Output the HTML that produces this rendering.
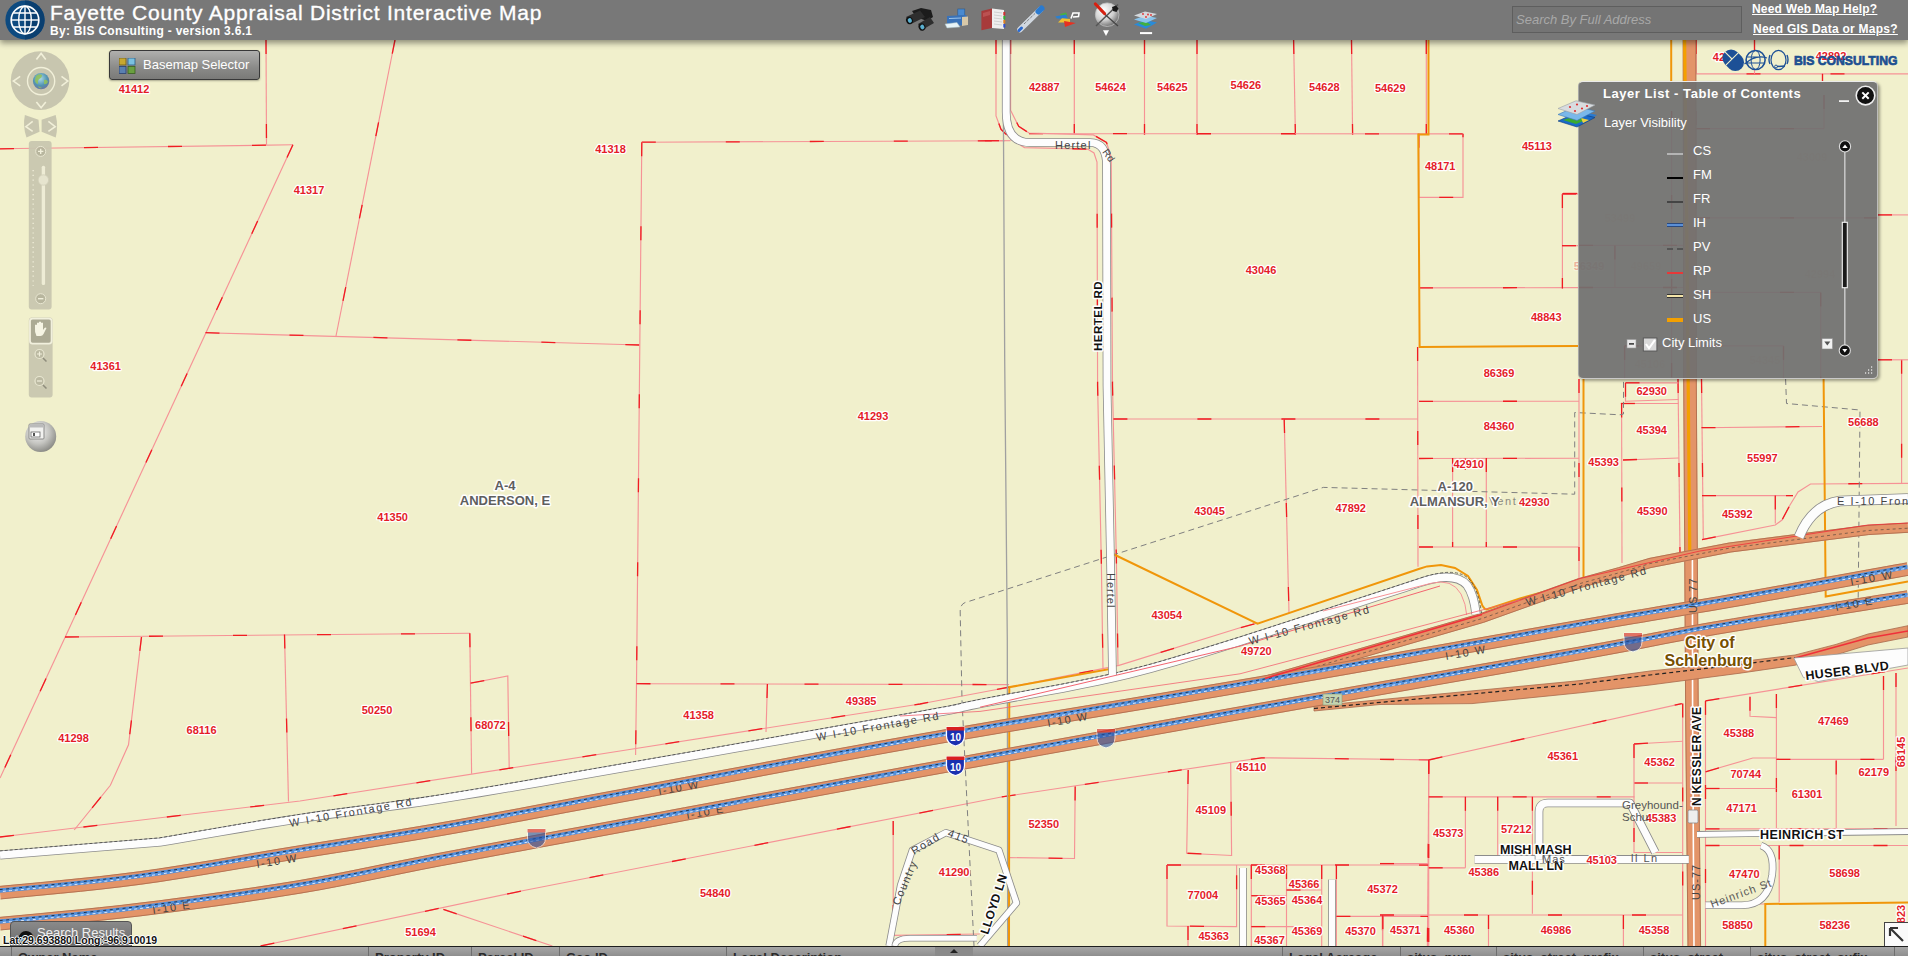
<!DOCTYPE html>
<html><head><meta charset="utf-8">
<style>
html,body{margin:0;padding:0;width:1908px;height:956px;overflow:hidden;background:#f1f0cc;font-family:"Liberation Sans",sans-serif;}
#map{position:absolute;left:0;top:0;width:1908px;height:946px;overflow:hidden;}
.lb{font-family:"Liberation Sans",sans-serif;font-size:11px;font-weight:bold;fill:#e41c28;text-anchor:middle;paint-order:stroke;stroke:#fff;stroke-width:2.4px;stroke-linejoin:round;}
.rl{font-family:"Liberation Sans",sans-serif;fill:#444;paint-order:stroke;stroke:#fff;stroke-width:0px;}
.bl{font-family:"Liberation Sans",sans-serif;font-weight:bold;fill:#111;paint-order:stroke;stroke:#fff;stroke-width:3px;stroke-linejoin:round;}
#hdr{position:absolute;left:0;top:0;width:1908px;height:40px;background:#787878;box-shadow:0 3px 6px rgba(0,0,0,0.42);}
#globe{position:absolute;left:5px;top:0px;width:40px;height:40px;}
#title{position:absolute;left:50px;top:1px;color:#fff;font-size:21px;line-height:24px;white-space:nowrap;letter-spacing:0.78px;-webkit-text-stroke:0.35px #fff;}
#sub{position:absolute;left:50px;top:24px;color:#fff;font-size:12px;font-weight:bold;line-height:14px;white-space:nowrap;letter-spacing:0.3px;}
#search{position:absolute;left:1512px;top:6px;width:230px;height:27px;border:1px solid #5e5e5e;background:#747474;box-sizing:border-box;}
#search span{position:absolute;left:3px;top:5px;color:#a8a8a8;font-style:italic;font-size:13px;white-space:nowrap;}
.lnk{position:absolute;color:#fff;font-weight:bold;font-size:12px;text-decoration:underline;white-space:nowrap;}
#tools{position:absolute;left:900px;top:0;width:270px;height:40px;}
#bot{position:absolute;left:0;top:946px;width:1908px;height:10px;background:linear-gradient(#a6a6a6,#8e8e8e);border-top:1px solid #1e1e1e;box-sizing:border-box;overflow:hidden;}
#bot .c{position:absolute;top:0;height:10px;width:0;border-left:1px solid #6e6e6e;}
#bot .t{position:absolute;top:3px;font-size:13px;font-weight:bold;color:#2a2a2a;white-space:nowrap;}
#panel{position:absolute;left:1578px;top:81px;width:300px;height:298px;background:rgba(112,112,112,0.93);border-radius:5px;box-shadow:2px 2px 3px rgba(0,0,0,0.35);border-top:1px solid rgba(255,255,255,0.85);border-left:1px solid rgba(255,255,255,0.35);border-bottom:1px solid rgba(255,255,255,0.6);border-right:1px solid rgba(255,255,255,0.5);box-sizing:border-box;}
.pt{position:absolute;color:#fff;font-size:13px;white-space:nowrap;line-height:14px;}
.lg{position:absolute;left:88px;width:16px;height:2px;}
#basemap{position:absolute;left:109px;top:50px;width:151px;height:30px;box-sizing:border-box;border:1px solid #383838;border-radius:3px;background:linear-gradient(#b0b0ae,#8a8a88 60%,#7a7a78);box-shadow:0 1px 2px rgba(0,0,0,0.3);}
#basemap span{position:absolute;left:33px;top:6px;color:#fff;font-size:13px;white-space:nowrap;}
#srtab{position:absolute;left:10px;top:921px;width:122px;height:26px;box-sizing:border-box;border-radius:4px 4px 0 0;background:linear-gradient(#8a8a8a,#6a6a6a);border:1px solid #555;}
#srtab span{position:absolute;left:26px;top:3px;color:#eee;font-size:13px;white-space:nowrap;}
#latlon{position:absolute;left:3px;top:934px;font-size:10.5px;font-weight:bold;color:#111;white-space:nowrap;text-shadow:-1px 0 #fff,1px 0 #fff,0 -1px #fff,0 1px #fff;}
</style></head>
<body>
<div id="map">
<svg width="1908" height="946" viewBox="0 0 1908 946" style="position:absolute;left:0;top:0">
<rect width="1908" height="946" fill="#f1f0cc"/>
<polyline points="266.0,40.0 266.5,144.8" fill="none" stroke="#f69296" stroke-width="1.15"/>
<polyline points="266.0,40.0 266.5,144.8" fill="none" stroke="#f01c22" stroke-width="1.3" stroke-dasharray="14,70"/>
<polyline points="0.0,148.8 292.9,144.8" fill="none" stroke="#f69296" stroke-width="1.15"/>
<polyline points="0.0,148.8 292.9,144.8" fill="none" stroke="#f01c22" stroke-width="1.3" stroke-dasharray="14,70"/>
<polyline points="292.9,144.8 0.0,778.0" fill="none" stroke="#f69296" stroke-width="1.15"/>
<polyline points="292.9,144.8 0.0,778.0" fill="none" stroke="#f01c22" stroke-width="1.3" stroke-dasharray="14,70"/>
<polyline points="395.0,40.0 336.0,336.0" fill="none" stroke="#f69296" stroke-width="1.15"/>
<polyline points="395.0,40.0 336.0,336.0" fill="none" stroke="#f01c22" stroke-width="1.3" stroke-dasharray="14,70"/>
<polyline points="205.5,332.7 640.0,345.0" fill="none" stroke="#f69296" stroke-width="1.15"/>
<polyline points="205.5,332.7 640.0,345.0" fill="none" stroke="#f01c22" stroke-width="1.3" stroke-dasharray="14,70"/>
<polyline points="641.8,142.2 1005.0,140.7" fill="none" stroke="#f69296" stroke-width="1.15"/>
<polyline points="641.8,142.2 1005.0,140.7" fill="none" stroke="#f01c22" stroke-width="1.3" stroke-dasharray="14,70"/>
<polyline points="641.8,142.2 636.5,683.7 635.6,754.9" fill="none" stroke="#f69296" stroke-width="1.15"/>
<polyline points="641.8,142.2 636.5,683.7 635.6,754.9" fill="none" stroke="#f01c22" stroke-width="1.3" stroke-dasharray="14,70"/>
<polyline points="65.0,637.0 470.0,633.3" fill="none" stroke="#f69296" stroke-width="1.15"/>
<polyline points="65.0,637.0 470.0,633.3" fill="none" stroke="#f01c22" stroke-width="1.3" stroke-dasharray="14,70"/>
<polyline points="141.5,637.0 128.5,744.8 110.4,785.3 74.2,830.0" fill="none" stroke="#f69296" stroke-width="1.15"/>
<polyline points="141.5,637.0 128.5,744.8 110.4,785.3 74.2,830.0" fill="none" stroke="#f01c22" stroke-width="1.3" stroke-dasharray="14,70"/>
<polyline points="284.5,634.5 288.5,801.6" fill="none" stroke="#f69296" stroke-width="1.15"/>
<polyline points="284.5,634.5 288.5,801.6" fill="none" stroke="#f01c22" stroke-width="1.3" stroke-dasharray="14,70"/>
<polyline points="469.8,633.3 471.6,773.7" fill="none" stroke="#f69296" stroke-width="1.15"/>
<polyline points="469.8,633.3 471.6,773.7" fill="none" stroke="#f01c22" stroke-width="1.3" stroke-dasharray="14,70"/>
<polyline points="470.5,683.2 507.8,676.0 509.2,768.3" fill="none" stroke="#f69296" stroke-width="1.15"/>
<polyline points="470.5,683.2 507.8,676.0 509.2,768.3" fill="none" stroke="#f01c22" stroke-width="1.3" stroke-dasharray="14,70"/>
<polyline points="0.0,837.0 300.0,801.0 620.0,751.0 920.0,704.0 1010.0,687.0 1119.0,665.4 1240.0,627.8 1258.0,623.0" fill="none" stroke="#f69296" stroke-width="1.15"/>
<polyline points="0.0,837.0 300.0,801.0 620.0,751.0 920.0,704.0 1010.0,687.0 1119.0,665.4 1240.0,627.8 1258.0,623.0" fill="none" stroke="#f01c22" stroke-width="1.3" stroke-dasharray="14,70"/>
<polyline points="636.5,683.7 1009.0,684.6" fill="none" stroke="#f69296" stroke-width="1.15"/>
<polyline points="636.5,683.7 1009.0,684.6" fill="none" stroke="#f01c22" stroke-width="1.3" stroke-dasharray="14,70"/>
<polyline points="767.4,684.0 766.0,732.0" fill="none" stroke="#f69296" stroke-width="1.15"/>
<polyline points="767.4,684.0 766.0,732.0" fill="none" stroke="#f01c22" stroke-width="1.3" stroke-dasharray="14,70"/>
<polyline points="260.6,946.0 520.0,891.3 1000.0,797.2 1261.6,757.8 1428.9,759.8" fill="none" stroke="#f69296" stroke-width="1.15"/>
<polyline points="260.6,946.0 520.0,891.3 1000.0,797.2 1261.6,757.8 1428.9,759.8" fill="none" stroke="#f01c22" stroke-width="1.3" stroke-dasharray="14,70"/>
<polyline points="1380.0,759.3 1428.7,760.0" fill="none" stroke="#f69296" stroke-width="1.15"/>
<polyline points="1380.0,759.3 1428.7,760.0" fill="none" stroke="#f01c22" stroke-width="1.3" stroke-dasharray="14,70"/>
<polyline points="1428.7,760.0 1681.8,703.6" fill="none" stroke="#f69296" stroke-width="1.15"/>
<polyline points="1428.7,760.0 1681.8,703.6" fill="none" stroke="#f01c22" stroke-width="1.3" stroke-dasharray="14,70"/>
<polyline points="1705.5,700.9 1908.0,668.0" fill="none" stroke="#f69296" stroke-width="1.15"/>
<polyline points="1705.5,700.9 1908.0,668.0" fill="none" stroke="#f01c22" stroke-width="1.3" stroke-dasharray="14,70"/>
<polyline points="443.4,909.4 552.4,946.0" fill="none" stroke="#f69296" stroke-width="1.15"/>
<polyline points="443.4,909.4 552.4,946.0" fill="none" stroke="#f01c22" stroke-width="1.3" stroke-dasharray="14,70"/>
<polyline points="893.2,820.9 893.2,935.4 979.8,934.0" fill="none" stroke="#f69296" stroke-width="1.15"/>
<polyline points="893.2,820.9 893.2,935.4 979.8,934.0" fill="none" stroke="#f01c22" stroke-width="1.3" stroke-dasharray="14,70"/>
<polyline points="1075.2,786.5 1074.5,858.5 1009.0,857.6" fill="none" stroke="#f69296" stroke-width="1.15"/>
<polyline points="1075.2,786.5 1074.5,858.5 1009.0,857.6" fill="none" stroke="#f01c22" stroke-width="1.3" stroke-dasharray="14,70"/>
<polyline points="1188.2,770.0 1186.7,853.2 1231.6,855.5 1230.7,762.5" fill="none" stroke="#f69296" stroke-width="1.15"/>
<polyline points="1188.2,770.0 1186.7,853.2 1231.6,855.5 1230.7,762.5" fill="none" stroke="#f01c22" stroke-width="1.3" stroke-dasharray="14,70"/>
<polyline points="1428.9,759.8 1427.4,946.0" fill="none" stroke="#f69296" stroke-width="1.15"/>
<polyline points="1428.9,759.8 1427.4,946.0" fill="none" stroke="#f01c22" stroke-width="1.3" stroke-dasharray="14,70"/>
<polyline points="1167.0,865.0 1428.9,865.0" fill="none" stroke="#f69296" stroke-width="1.15"/>
<polyline points="1167.0,865.0 1428.9,865.0" fill="none" stroke="#f01c22" stroke-width="1.3" stroke-dasharray="14,70"/>
<polyline points="1167.0,865.0 1167.0,926.0 1236.6,926.6 1236.6,865.0" fill="none" stroke="#f69296" stroke-width="1.15"/>
<polyline points="1167.0,865.0 1167.0,926.0 1236.6,926.6 1236.6,865.0" fill="none" stroke="#f01c22" stroke-width="1.3" stroke-dasharray="14,70"/>
<polyline points="1188.0,926.0 1188.0,946.0" fill="none" stroke="#f69296" stroke-width="1.15"/>
<polyline points="1188.0,926.0 1188.0,946.0" fill="none" stroke="#f01c22" stroke-width="1.3" stroke-dasharray="14,70"/>
<polyline points="1251.3,865.0 1251.3,946.0" fill="none" stroke="#f69296" stroke-width="1.15"/>
<polyline points="1251.3,865.0 1251.3,946.0" fill="none" stroke="#f01c22" stroke-width="1.3" stroke-dasharray="14,70"/>
<polyline points="1286.5,865.0 1286.5,946.0" fill="none" stroke="#f69296" stroke-width="1.15"/>
<polyline points="1286.5,865.0 1286.5,946.0" fill="none" stroke="#f01c22" stroke-width="1.3" stroke-dasharray="14,70"/>
<polyline points="1251.3,895.7 1286.5,895.7" fill="none" stroke="#f69296" stroke-width="1.15"/>
<polyline points="1251.3,895.7 1286.5,895.7" fill="none" stroke="#f01c22" stroke-width="1.3" stroke-dasharray="14,70"/>
<polyline points="1251.3,926.6 1321.7,926.6" fill="none" stroke="#f69296" stroke-width="1.15"/>
<polyline points="1251.3,926.6 1321.7,926.6" fill="none" stroke="#f01c22" stroke-width="1.3" stroke-dasharray="14,70"/>
<polyline points="1286.5,890.0 1321.7,890.0" fill="none" stroke="#f69296" stroke-width="1.15"/>
<polyline points="1286.5,890.0 1321.7,890.0" fill="none" stroke="#f01c22" stroke-width="1.3" stroke-dasharray="14,70"/>
<polyline points="1321.7,865.0 1321.7,946.0" fill="none" stroke="#f69296" stroke-width="1.15"/>
<polyline points="1321.7,865.0 1321.7,946.0" fill="none" stroke="#f01c22" stroke-width="1.3" stroke-dasharray="14,70"/>
<polyline points="1336.4,865.0 1336.4,946.0" fill="none" stroke="#f69296" stroke-width="1.15"/>
<polyline points="1336.4,865.0 1336.4,946.0" fill="none" stroke="#f01c22" stroke-width="1.3" stroke-dasharray="14,70"/>
<polyline points="1336.4,916.3 1428.0,916.3" fill="none" stroke="#f69296" stroke-width="1.15"/>
<polyline points="1336.4,916.3 1428.0,916.3" fill="none" stroke="#f01c22" stroke-width="1.3" stroke-dasharray="14,70"/>
<polyline points="1382.5,916.3 1382.5,946.0" fill="none" stroke="#f69296" stroke-width="1.15"/>
<polyline points="1382.5,916.3 1382.5,946.0" fill="none" stroke="#f01c22" stroke-width="1.3" stroke-dasharray="14,70"/>
<polyline points="1074.3,40.0 1074.3,133.7" fill="none" stroke="#f69296" stroke-width="1.15"/>
<polyline points="1074.3,40.0 1074.3,133.7" fill="none" stroke="#f01c22" stroke-width="1.3" stroke-dasharray="14,70"/>
<polyline points="1144.5,40.0 1144.5,134.8" fill="none" stroke="#f69296" stroke-width="1.15"/>
<polyline points="1144.5,40.0 1144.5,134.8" fill="none" stroke="#f01c22" stroke-width="1.3" stroke-dasharray="14,70"/>
<polyline points="1197.0,40.0 1197.0,134.8" fill="none" stroke="#f69296" stroke-width="1.15"/>
<polyline points="1197.0,40.0 1197.0,134.8" fill="none" stroke="#f01c22" stroke-width="1.3" stroke-dasharray="14,70"/>
<polyline points="1293.6,40.0 1295.4,134.8" fill="none" stroke="#f69296" stroke-width="1.15"/>
<polyline points="1293.6,40.0 1295.4,134.8" fill="none" stroke="#f01c22" stroke-width="1.3" stroke-dasharray="14,70"/>
<polyline points="1351.5,40.0 1352.6,134.8" fill="none" stroke="#f69296" stroke-width="1.15"/>
<polyline points="1351.5,40.0 1352.6,134.8" fill="none" stroke="#f01c22" stroke-width="1.3" stroke-dasharray="14,70"/>
<polyline points="1029.0,133.7 1462.7,133.8" fill="none" stroke="#f69296" stroke-width="1.15"/>
<polyline points="1029.0,133.7 1462.7,133.8" fill="none" stroke="#f01c22" stroke-width="1.3" stroke-dasharray="14,70"/>
<polyline points="985.0,140.7 1010.6,140.7" fill="none" stroke="#f69296" stroke-width="1.15"/>
<polyline points="985.0,140.7 1010.6,140.7" fill="none" stroke="#f01c22" stroke-width="1.3" stroke-dasharray="14,70"/>
<polyline points="1426.3,40.0 1426.3,133.8" fill="none" stroke="#f69296" stroke-width="1.15"/>
<polyline points="1426.3,40.0 1426.3,133.8" fill="none" stroke="#f01c22" stroke-width="1.3" stroke-dasharray="14,70"/>
<polyline points="996.0,40.0 996.0,116.0 1001.0,129.3 1012.0,140.0 1024.5,147.6 1087.5,149.1 1094.0,153.0 1097.0,162.0 1097.6,386.0 1101.3,560.0 1103.0,668.7" fill="none" stroke="#f69296" stroke-width="1.15"/>
<polyline points="996.0,40.0 996.0,116.0 1001.0,129.3 1012.0,140.0 1024.5,147.6 1087.5,149.1 1094.0,153.0 1097.0,162.0 1097.6,386.0 1101.3,560.0 1103.0,668.7" fill="none" stroke="#f01c22" stroke-width="1.3" stroke-dasharray="14,70"/>
<polyline points="1010.6,40.0 1010.6,110.3 1018.7,126.4 1029.0,133.0 1093.4,134.9 1106.5,142.5 1111.2,157.0 1112.5,386.0 1116.4,560.0 1118.0,665.4" fill="none" stroke="#f69296" stroke-width="1.15"/>
<polyline points="1010.6,40.0 1010.6,110.3 1018.7,126.4 1029.0,133.0 1093.4,134.9 1106.5,142.5 1111.2,157.0 1112.5,386.0 1116.4,560.0 1118.0,665.4" fill="none" stroke="#f01c22" stroke-width="1.3" stroke-dasharray="14,70"/>
<polyline points="1113.4,419.0 1417.6,419.0" fill="none" stroke="#f69296" stroke-width="1.15"/>
<polyline points="1113.4,419.0 1417.6,419.0" fill="none" stroke="#f01c22" stroke-width="1.3" stroke-dasharray="14,70"/>
<polyline points="1284.2,419.0 1289.0,613.0" fill="none" stroke="#f69296" stroke-width="1.15"/>
<polyline points="1284.2,419.0 1289.0,613.0" fill="none" stroke="#f01c22" stroke-width="1.3" stroke-dasharray="14,70"/>
<polyline points="1417.6,347.0 1418.0,566.8" fill="none" stroke="#f69296" stroke-width="1.15"/>
<polyline points="1417.6,347.0 1418.0,566.8" fill="none" stroke="#f01c22" stroke-width="1.3" stroke-dasharray="14,70"/>
<polyline points="1418.8,133.8 1418.8,197.4 1463.0,197.4 1463.0,133.8" fill="none" stroke="#f69296" stroke-width="1.15"/>
<polyline points="1418.8,133.8 1418.8,197.4 1463.0,197.4 1463.0,133.8" fill="none" stroke="#f01c22" stroke-width="1.3" stroke-dasharray="14,70"/>
<polyline points="1419.0,287.9 1578.0,287.6" fill="none" stroke="#f69296" stroke-width="1.15"/>
<polyline points="1419.0,287.9 1578.0,287.6" fill="none" stroke="#f01c22" stroke-width="1.3" stroke-dasharray="14,70"/>
<polyline points="1562.4,194.0 1562.4,288.5" fill="none" stroke="#f69296" stroke-width="1.15"/>
<polyline points="1562.4,194.0 1562.4,288.5" fill="none" stroke="#f01c22" stroke-width="1.3" stroke-dasharray="14,70"/>
<polyline points="1562.0,194.0 1578.0,194.0" fill="none" stroke="#f69296" stroke-width="1.15"/>
<polyline points="1562.0,194.0 1578.0,194.0" fill="none" stroke="#f01c22" stroke-width="1.3" stroke-dasharray="14,70"/>
<polyline points="1562.0,245.7 1578.0,245.7" fill="none" stroke="#f69296" stroke-width="1.15"/>
<polyline points="1562.0,245.7 1578.0,245.7" fill="none" stroke="#f01c22" stroke-width="1.3" stroke-dasharray="14,70"/>
<polyline points="1419.0,401.3 1579.0,401.2" fill="none" stroke="#f69296" stroke-width="1.15"/>
<polyline points="1419.0,401.3 1579.0,401.2" fill="none" stroke="#f01c22" stroke-width="1.3" stroke-dasharray="14,70"/>
<polyline points="1419.0,458.5 1579.0,458.2" fill="none" stroke="#f69296" stroke-width="1.15"/>
<polyline points="1419.0,458.5 1579.0,458.2" fill="none" stroke="#f01c22" stroke-width="1.3" stroke-dasharray="14,70"/>
<polyline points="1419.0,547.0 1579.0,547.0" fill="none" stroke="#f69296" stroke-width="1.15"/>
<polyline points="1419.0,547.0 1579.0,547.0" fill="none" stroke="#f01c22" stroke-width="1.3" stroke-dasharray="14,70"/>
<polyline points="1452.6,458.0 1452.6,547.0" fill="none" stroke="#f69296" stroke-width="1.15"/>
<polyline points="1452.6,458.0 1452.6,547.0" fill="none" stroke="#f01c22" stroke-width="1.3" stroke-dasharray="14,70"/>
<polyline points="1486.3,458.0 1486.3,547.0" fill="none" stroke="#f69296" stroke-width="1.15"/>
<polyline points="1486.3,458.0 1486.3,547.0" fill="none" stroke="#f01c22" stroke-width="1.3" stroke-dasharray="14,70"/>
<polyline points="1465.3,458.5 1465.3,470.0" fill="none" stroke="#f69296" stroke-width="1.15"/>
<polyline points="1465.3,458.5 1465.3,470.0" fill="none" stroke="#f01c22" stroke-width="1.3" stroke-dasharray="14,70"/>
<polyline points="1579.0,379.0 1579.0,580.6" fill="none" stroke="#f69296" stroke-width="1.15"/>
<polyline points="1579.0,379.0 1579.0,580.6" fill="none" stroke="#f01c22" stroke-width="1.3" stroke-dasharray="14,70"/>
<polyline points="1621.6,403.5 1622.0,563.0" fill="none" stroke="#f69296" stroke-width="1.15"/>
<polyline points="1621.6,403.5 1622.0,563.0" fill="none" stroke="#f01c22" stroke-width="1.3" stroke-dasharray="14,70"/>
<polyline points="1623.0,460.0 1678.7,458.0" fill="none" stroke="#f69296" stroke-width="1.15"/>
<polyline points="1623.0,460.0 1678.7,458.0" fill="none" stroke="#f01c22" stroke-width="1.3" stroke-dasharray="14,70"/>
<polyline points="1678.0,379.0 1680.0,552.7" fill="none" stroke="#f69296" stroke-width="1.15"/>
<polyline points="1678.0,379.0 1680.0,552.7" fill="none" stroke="#f01c22" stroke-width="1.3" stroke-dasharray="14,70"/>
<polyline points="1625.5,382.8 1678.4,382.8" fill="none" stroke="#f69296" stroke-width="1.15"/>
<polyline points="1625.5,382.8 1678.4,382.8" fill="none" stroke="#f01c22" stroke-width="1.3" stroke-dasharray="14,70"/>
<polyline points="1625.5,382.8 1625.5,401.2 1678.4,399.5" fill="none" stroke="#f69296" stroke-width="1.15"/>
<polyline points="1625.5,382.8 1625.5,401.2 1678.4,399.5" fill="none" stroke="#f01c22" stroke-width="1.3" stroke-dasharray="14,70"/>
<polyline points="1620.9,403.5 1678.4,403.5" fill="none" stroke="#f69296" stroke-width="1.15"/>
<polyline points="1620.9,403.5 1678.4,403.5" fill="none" stroke="#f01c22" stroke-width="1.3" stroke-dasharray="14,70"/>
<polyline points="1701.5,379.0 1703.3,540.0" fill="none" stroke="#f69296" stroke-width="1.15"/>
<polyline points="1701.5,379.0 1703.3,540.0" fill="none" stroke="#f01c22" stroke-width="1.3" stroke-dasharray="14,70"/>
<polyline points="1701.5,427.7 1822.0,426.5" fill="none" stroke="#f69296" stroke-width="1.15"/>
<polyline points="1701.5,427.7 1822.0,426.5" fill="none" stroke="#f01c22" stroke-width="1.3" stroke-dasharray="14,70"/>
<polyline points="1702.0,495.6 1793.0,495.6" fill="none" stroke="#f69296" stroke-width="1.15"/>
<polyline points="1702.0,495.6 1793.0,495.6" fill="none" stroke="#f01c22" stroke-width="1.3" stroke-dasharray="14,70"/>
<polyline points="1775.3,495.6 1775.3,523.5" fill="none" stroke="#f69296" stroke-width="1.15"/>
<polyline points="1775.3,495.6 1775.3,523.5" fill="none" stroke="#f01c22" stroke-width="1.3" stroke-dasharray="14,70"/>
<polyline points="1702.0,539.6 1775.3,525.0 1782.0,520.0 1790.0,505.0 1798.0,492.0 1810.5,484.0 1908.0,483.3" fill="none" stroke="#f69296" stroke-width="1.15"/>
<polyline points="1702.0,539.6 1775.3,525.0 1782.0,520.0 1790.0,505.0 1798.0,492.0 1810.5,484.0 1908.0,483.3" fill="none" stroke="#f01c22" stroke-width="1.3" stroke-dasharray="14,70"/>
<polyline points="1901.6,359.8 1901.6,483.3" fill="none" stroke="#f69296" stroke-width="1.15"/>
<polyline points="1901.6,359.8 1901.6,483.3" fill="none" stroke="#f01c22" stroke-width="1.3" stroke-dasharray="14,70"/>
<polyline points="1878.0,214.9 1908.0,214.9" fill="none" stroke="#f69296" stroke-width="1.15"/>
<polyline points="1878.0,214.9 1908.0,214.9" fill="none" stroke="#f01c22" stroke-width="1.3" stroke-dasharray="14,70"/>
<polyline points="1878.0,359.8 1908.0,359.8" fill="none" stroke="#f69296" stroke-width="1.15"/>
<polyline points="1878.0,359.8 1908.0,359.8" fill="none" stroke="#f01c22" stroke-width="1.3" stroke-dasharray="14,70"/>
<polyline points="1696.3,40.0 1696.3,73.8 1908.0,73.8" fill="none" stroke="#f69296" stroke-width="1.15"/>
<polyline points="1696.3,40.0 1696.3,73.8 1908.0,73.8" fill="none" stroke="#f01c22" stroke-width="1.3" stroke-dasharray="14,70"/>
<polyline points="1754.5,40.0 1754.5,73.8" fill="none" stroke="#f69296" stroke-width="1.15"/>
<polyline points="1754.5,40.0 1754.5,73.8" fill="none" stroke="#f01c22" stroke-width="1.3" stroke-dasharray="14,70"/>
<polyline points="1822.5,73.8 1822.5,81.0" fill="none" stroke="#f69296" stroke-width="1.15"/>
<polyline points="1822.5,73.8 1822.5,81.0" fill="none" stroke="#f01c22" stroke-width="1.3" stroke-dasharray="14,70"/>
<polyline points="1428.7,760.0 1428.7,946.0" fill="none" stroke="#f69296" stroke-width="1.15"/>
<polyline points="1428.7,760.0 1428.7,946.0" fill="none" stroke="#f01c22" stroke-width="1.3" stroke-dasharray="14,70"/>
<polyline points="1428.7,796.8 1634.5,796.8" fill="none" stroke="#f69296" stroke-width="1.15"/>
<polyline points="1428.7,796.8 1634.5,796.8" fill="none" stroke="#f01c22" stroke-width="1.3" stroke-dasharray="14,70"/>
<polyline points="1682.7,703.6 1682.7,946.0" fill="none" stroke="#f69296" stroke-width="1.15"/>
<polyline points="1682.7,703.6 1682.7,946.0" fill="none" stroke="#f01c22" stroke-width="1.3" stroke-dasharray="14,70"/>
<polyline points="1634.0,744.0 1682.7,741.2" fill="none" stroke="#f69296" stroke-width="1.15"/>
<polyline points="1634.0,744.0 1682.7,741.2" fill="none" stroke="#f01c22" stroke-width="1.3" stroke-dasharray="14,70"/>
<polyline points="1634.0,783.0 1682.7,783.0" fill="none" stroke="#f69296" stroke-width="1.15"/>
<polyline points="1634.0,783.0 1682.7,783.0" fill="none" stroke="#f01c22" stroke-width="1.3" stroke-dasharray="14,70"/>
<polyline points="1634.0,744.0 1634.0,852.5 1682.7,852.5" fill="none" stroke="#f69296" stroke-width="1.15"/>
<polyline points="1634.0,744.0 1634.0,852.5 1682.7,852.5" fill="none" stroke="#f01c22" stroke-width="1.3" stroke-dasharray="14,70"/>
<polyline points="1465.4,796.8 1465.4,867.8" fill="none" stroke="#f69296" stroke-width="1.15"/>
<polyline points="1465.4,796.8 1465.4,867.8" fill="none" stroke="#f01c22" stroke-width="1.3" stroke-dasharray="14,70"/>
<polyline points="1380.0,863.6 1428.7,863.6" fill="none" stroke="#f69296" stroke-width="1.15"/>
<polyline points="1380.0,863.6 1428.7,863.6" fill="none" stroke="#f01c22" stroke-width="1.3" stroke-dasharray="14,70"/>
<polyline points="1428.7,867.8 1465.4,867.8" fill="none" stroke="#f69296" stroke-width="1.15"/>
<polyline points="1428.7,867.8 1465.4,867.8" fill="none" stroke="#f01c22" stroke-width="1.3" stroke-dasharray="14,70"/>
<polyline points="1497.7,796.8 1497.7,858.0" fill="none" stroke="#f69296" stroke-width="1.15"/>
<polyline points="1497.7,796.8 1497.7,858.0" fill="none" stroke="#f01c22" stroke-width="1.3" stroke-dasharray="14,70"/>
<polyline points="1532.4,796.8 1532.4,913.7" fill="none" stroke="#f69296" stroke-width="1.15"/>
<polyline points="1532.4,796.8 1532.4,913.7" fill="none" stroke="#f01c22" stroke-width="1.3" stroke-dasharray="14,70"/>
<polyline points="1380.0,915.0 1682.7,915.0" fill="none" stroke="#f69296" stroke-width="1.15"/>
<polyline points="1380.0,915.0 1682.7,915.0" fill="none" stroke="#f01c22" stroke-width="1.3" stroke-dasharray="14,70"/>
<polyline points="1488.5,915.0 1488.5,946.0" fill="none" stroke="#f69296" stroke-width="1.15"/>
<polyline points="1488.5,915.0 1488.5,946.0" fill="none" stroke="#f01c22" stroke-width="1.3" stroke-dasharray="14,70"/>
<polyline points="1623.4,915.0 1623.4,946.0" fill="none" stroke="#f69296" stroke-width="1.15"/>
<polyline points="1623.4,915.0 1623.4,946.0" fill="none" stroke="#f01c22" stroke-width="1.3" stroke-dasharray="14,70"/>
<polyline points="1382.8,915.0 1382.8,946.0" fill="none" stroke="#f69296" stroke-width="1.15"/>
<polyline points="1382.8,915.0 1382.8,946.0" fill="none" stroke="#f01c22" stroke-width="1.3" stroke-dasharray="14,70"/>
<polyline points="1705.5,700.9 1705.5,946.0" fill="none" stroke="#f69296" stroke-width="1.15"/>
<polyline points="1705.5,700.9 1705.5,946.0" fill="none" stroke="#f01c22" stroke-width="1.3" stroke-dasharray="14,70"/>
<polyline points="1776.4,694.0 1776.4,830.0" fill="none" stroke="#f69296" stroke-width="1.15"/>
<polyline points="1776.4,694.0 1776.4,830.0" fill="none" stroke="#f01c22" stroke-width="1.3" stroke-dasharray="14,70"/>
<polyline points="1750.0,696.7 1750.0,716.2 1776.4,717.6" fill="none" stroke="#f69296" stroke-width="1.15"/>
<polyline points="1750.0,696.7 1750.0,716.2 1776.4,717.6" fill="none" stroke="#f01c22" stroke-width="1.3" stroke-dasharray="14,70"/>
<polyline points="1776.4,759.3 1883.5,759.3" fill="none" stroke="#f69296" stroke-width="1.15"/>
<polyline points="1776.4,759.3 1883.5,759.3" fill="none" stroke="#f01c22" stroke-width="1.3" stroke-dasharray="14,70"/>
<polyline points="1883.5,676.0 1883.5,759.3" fill="none" stroke="#f69296" stroke-width="1.15"/>
<polyline points="1883.5,676.0 1883.5,759.3" fill="none" stroke="#f01c22" stroke-width="1.3" stroke-dasharray="14,70"/>
<polyline points="1896.0,673.0 1896.0,826.0" fill="none" stroke="#f69296" stroke-width="1.15"/>
<polyline points="1896.0,673.0 1896.0,826.0" fill="none" stroke="#f01c22" stroke-width="1.3" stroke-dasharray="14,70"/>
<polyline points="1705.5,771.8 1752.8,758.0 1776.4,758.0" fill="none" stroke="#f69296" stroke-width="1.15"/>
<polyline points="1705.5,771.8 1752.8,758.0 1776.4,758.0" fill="none" stroke="#f01c22" stroke-width="1.3" stroke-dasharray="14,70"/>
<polyline points="1705.5,788.5 1776.4,788.5" fill="none" stroke="#f69296" stroke-width="1.15"/>
<polyline points="1705.5,788.5 1776.4,788.5" fill="none" stroke="#f01c22" stroke-width="1.3" stroke-dasharray="14,70"/>
<polyline points="1705.5,828.8 1908.0,828.8" fill="none" stroke="#f69296" stroke-width="1.15"/>
<polyline points="1705.5,828.8 1908.0,828.8" fill="none" stroke="#f01c22" stroke-width="1.3" stroke-dasharray="14,70"/>
<polyline points="1836.2,760.5 1836.2,828.8" fill="none" stroke="#f69296" stroke-width="1.15"/>
<polyline points="1836.2,760.5 1836.2,828.8" fill="none" stroke="#f01c22" stroke-width="1.3" stroke-dasharray="14,70"/>
<polyline points="1705.5,845.5 1908.0,845.5" fill="none" stroke="#f69296" stroke-width="1.15"/>
<polyline points="1705.5,845.5 1908.0,845.5" fill="none" stroke="#f01c22" stroke-width="1.3" stroke-dasharray="14,70"/>
<polyline points="1779.2,845.5 1779.2,902.6" fill="none" stroke="#f69296" stroke-width="1.15"/>
<polyline points="1779.2,845.5 1779.2,902.6" fill="none" stroke="#f01c22" stroke-width="1.3" stroke-dasharray="14,70"/>
<polyline points="1705.5,904.0 1765.3,904.0" fill="none" stroke="#f69296" stroke-width="1.15"/>
<polyline points="1705.5,904.0 1765.3,904.0" fill="none" stroke="#f01c22" stroke-width="1.3" stroke-dasharray="14,70"/>
<polyline points="1563.0,193.5 1578.0,193.5" fill="none" stroke="#f69296" stroke-width="1.15"/>
<polyline points="1563.0,193.5 1578.0,193.5" fill="none" stroke="#f01c22" stroke-width="1.3" stroke-dasharray="14,70"/>
<polyline points="1696.0,111.0 1696.0,379.0" fill="none" stroke="#f69296" stroke-width="1.15"/>
<polyline points="1696.0,111.0 1696.0,379.0" fill="none" stroke="#f01c22" stroke-width="1.3" stroke-dasharray="14,70"/>
<polyline points="1671.6,111.0 1671.6,379.0" fill="none" stroke="#f69296" stroke-width="1.15"/>
<polyline points="1671.6,111.0 1671.6,379.0" fill="none" stroke="#f01c22" stroke-width="1.3" stroke-dasharray="14,70"/>
<polyline points="1696.0,128.6 1824.0,128.6" fill="none" stroke="#f69296" stroke-width="1.15"/>
<polyline points="1696.0,128.6 1824.0,128.6" fill="none" stroke="#f01c22" stroke-width="1.3" stroke-dasharray="14,70"/>
<polyline points="1824.0,95.0 1824.0,128.6" fill="none" stroke="#f69296" stroke-width="1.15"/>
<polyline points="1824.0,95.0 1824.0,128.6" fill="none" stroke="#f01c22" stroke-width="1.3" stroke-dasharray="14,70"/>
<polyline points="1579.0,245.4 1696.0,245.4" fill="none" stroke="#f69296" stroke-width="1.15"/>
<polyline points="1579.0,245.4 1696.0,245.4" fill="none" stroke="#f01c22" stroke-width="1.3" stroke-dasharray="14,70"/>
<polyline points="1614.9,245.4 1614.9,287.5" fill="none" stroke="#f69296" stroke-width="1.15"/>
<polyline points="1614.9,245.4 1614.9,287.5" fill="none" stroke="#f01c22" stroke-width="1.3" stroke-dasharray="14,70"/>
<polyline points="1579.0,287.5 1696.0,287.5" fill="none" stroke="#f69296" stroke-width="1.15"/>
<polyline points="1579.0,287.5 1696.0,287.5" fill="none" stroke="#f01c22" stroke-width="1.3" stroke-dasharray="14,70"/>
<polyline points="1696.0,217.8 1878.0,217.8" fill="none" stroke="#f69296" stroke-width="1.15"/>
<polyline points="1696.0,217.8 1878.0,217.8" fill="none" stroke="#f01c22" stroke-width="1.3" stroke-dasharray="14,70"/>
<polyline points="1696.0,292.4 1820.7,292.4" fill="none" stroke="#f69296" stroke-width="1.15"/>
<polyline points="1696.0,292.4 1820.7,292.4" fill="none" stroke="#f01c22" stroke-width="1.3" stroke-dasharray="14,70"/>
<polyline points="1820.7,292.4 1820.7,379.0" fill="none" stroke="#f69296" stroke-width="1.15"/>
<polyline points="1820.7,292.4 1820.7,379.0" fill="none" stroke="#f01c22" stroke-width="1.3" stroke-dasharray="14,70"/>
<polyline points="1624.6,345.9 1624.6,379.0" fill="none" stroke="#f69296" stroke-width="1.15"/>
<polyline points="1624.6,345.9 1624.6,379.0" fill="none" stroke="#f01c22" stroke-width="1.3" stroke-dasharray="14,70"/>
<polyline points="1783.5,345.9 1783.5,379.0" fill="none" stroke="#f69296" stroke-width="1.15"/>
<polyline points="1783.5,345.9 1783.5,379.0" fill="none" stroke="#f01c22" stroke-width="1.3" stroke-dasharray="14,70"/>
<polyline points="1624.6,345.9 1783.5,345.9" fill="none" stroke="#f69296" stroke-width="1.15"/>
<polyline points="1624.6,345.9 1783.5,345.9" fill="none" stroke="#f01c22" stroke-width="1.3" stroke-dasharray="14,70"/>
<polyline points="1003,40 1004.7,360 1007.3,640 1007.7,946" fill="none" stroke="#a0a0a0" stroke-width="1.3"/>
<path d="M974,946 L962,700 L960.2,612 Q960,603 967.3,601.9 L1323.3,487.4 L1574.7,494.2 L1574.7,412.5 L1620,414.8 L1623.5,414 L1623.5,379" stroke="#808080" stroke-width="1" stroke-dasharray="6,4" fill="none"/>
<path d="M1785.6,379 L1786.5,403.5 L1860,410 L1858.2,598" stroke="#808080" stroke-width="1" stroke-dasharray="6,4" fill="none"/>
<polyline points="1428.5,40.0 1428.5,134.6 1418.3,134.6 1419.6,347.0 1578.0,346.0" fill="none" stroke="#f0960a" stroke-width="2"/>
<polyline points="1109.7,552.5 1111.7,668.7 1009.3,687.2 1009.0,946.0" fill="none" stroke="#f0960a" stroke-width="2"/>
<polyline points="1109.9,552.5 1257.5,623.7 1419.5,568.8 1427.0,566.4 1441.0,565.0 1455.0,568.0 1468.0,576.0 1477.0,590.0 1482.5,606.0 1485.5,609.7" fill="none" stroke="#f0960a" stroke-width="2"/>
<polyline points="1583.5,379.0 1583.5,580.6 1520.0,598.4 1485.5,609.7" fill="none" stroke="#f0960a" stroke-width="2"/>
<polyline points="1823.6,379.0 1825.7,596.5 1908.0,581.6" fill="none" stroke="#f0960a" stroke-width="2"/>
<polyline points="1765.3,946.0 1765.3,904.0 1908.0,902.6" fill="none" stroke="#f0960a" stroke-width="2"/>
<polyline points="1671.2,40.0 1671.2,81.0" fill="none" stroke="#f0960a" stroke-width="2"/>
<polyline points="1689.5,40.0 1690.0,380.0 1692.0,720.0 1694.3,946.0" fill="none" stroke="#e39468" stroke-width="13.5" stroke-linejoin="round"/>
<polyline points="1695.8,40.0 1696.3,380.0 1698.3,719.9 1700.6,945.9" fill="none" stroke="#a86a4c" stroke-width="0.8"/>
<polyline points="1683.2,40.0 1683.7,380.0 1685.7,720.1 1688.0,946.1" fill="none" stroke="#a86a4c" stroke-width="0.8"/>
<polyline points="1684.6,40 1686.5,200 1689.8,557" fill="none" stroke="#f4a000" stroke-width="3.2"/>
<polyline points="1692.4,557 1692.6,720 1694,946" fill="none" stroke="#ffffff" stroke-width="1.6"/>
<polyline points="1265.0,681.0 1482.0,618.0 1580.0,583.0 1620.0,572.0 1650.0,563.0 1730.0,547.5 1868.0,530.0 1908.0,527.7" fill="none" stroke="#e39468" stroke-width="10" stroke-linejoin="round"/>
<polyline points="1263.7,676.6 1480.6,613.6 1578.6,578.6 1618.7,567.6 1648.9,558.5 1729.3,543.0 1867.6,525.4 1907.7,523.1" fill="none" stroke="#a86a4c" stroke-width="0.8"/>
<polyline points="1266.3,685.4 1483.4,622.4 1581.4,587.4 1621.3,576.4 1651.1,567.5 1730.7,552.0 1868.4,534.6 1908.3,532.3" fill="none" stroke="#a86a4c" stroke-width="0.8"/>
<polyline points="1265.1,681.5 1482.2,618.5 1580.2,583.5 1620.1,572.5 1650.1,563.5 1730.1,548.0 1868.0,530.5 1908.0,528.2" fill="none" stroke="#333" stroke-width="1" stroke-dasharray="3,3" stroke-opacity="0.55"/>
<polygon points="1314.0,706.0 1580.0,680.6 1650.0,671.0 1740.0,661.7 1795.0,655.0 1836.0,644.4 1868.0,634.0 1908.0,625.7 1908.0,637.0 1868.0,645.0 1836.0,654.8 1795.0,665.2 1740.0,673.2 1650.0,685.0 1580.0,692.8 1472.0,703.6 1380.0,704.5 1314.0,711.0" fill="#e39468" stroke="#a86a4c" stroke-width="0.8"/>
<polyline points="1314.0,708.5 1580.0,684.0 1650.0,675.0 1740.0,664.5 1795.0,657.5" fill="none" stroke="#222" stroke-width="1.2" stroke-dasharray="4,3"/>
<polyline points="1795.0,658.0 1868.0,638.0 1908.0,631.0" fill="none" stroke="#f0303a" stroke-width="1.5"/>
<polyline points="0.0,892.7 10.7,891.6 24.7,890.3 41.4,888.8 60.0,887.0 79.9,885.0 100.3,882.8 120.6,880.5 140.0,878.0 159.2,875.3 179.1,872.2 199.4,868.9 220.0,865.5 240.6,862.0 260.9,858.5 280.8,855.2 300.0,852.0 318.2,849.1 335.5,846.4 352.2,843.8 368.8,841.2 385.4,838.5 402.7,835.7 420.7,832.7 440.0,829.4 459.8,825.9 479.4,822.3 499.3,818.6 520.0,814.8 542.0,810.6 565.6,806.2 591.5,801.3 620.0,796.0 651.5,790.1 685.6,783.7 722.0,776.9 760.0,769.8 799.3,762.4 839.4,755.0 879.8,747.7 920.0,740.5 960.7,733.4 1002.7,726.2 1045.4,719.0 1088.8,711.8 1132.2,704.6 1175.5,697.4 1218.2,690.2 1260.0,683.0 1302.7,675.6 1347.3,667.8 1392.5,659.8 1436.9,651.9 1479.2,644.4 1518.0,637.5 1552.1,631.4 1580.0,626.5 1600.6,622.9 1614.8,620.4 1624.1,618.8 1630.0,617.8 1634.0,617.2 1637.7,616.6 1642.5,615.8 1650.0,614.5 1659.3,612.9 1668.7,611.4 1678.1,609.8 1687.8,608.2 1697.7,606.5 1707.9,604.8 1718.7,603.0 1730.0,601.0 1742.2,598.8 1755.5,596.5 1769.3,594.0 1783.5,591.5 1797.6,588.9 1811.3,586.5 1824.2,584.1 1836.0,582.0 1847.1,580.0 1858.1,578.0 1868.7,576.1 1878.6,574.3 1887.8,572.7 1895.9,571.2 1902.7,570.0 1908.0,569.0" fill="none" stroke="#e39468" stroke-width="13.4" stroke-linejoin="round"/>
<polyline points="-0.6,886.4 10.1,885.4 24.1,884.1 40.8,882.5 59.4,880.7 79.2,878.7 99.6,876.6 119.8,874.2 139.2,871.8 158.3,869.0 178.1,866.0 198.4,862.7 219.0,859.3 239.5,855.8 259.9,852.3 279.8,849.0 299.0,845.8 317.2,842.9 334.5,840.1 351.2,837.5 367.8,834.9 384.5,832.3 401.6,829.5 419.7,826.5 438.9,823.2 458.7,819.7 478.2,816.1 498.1,812.4 518.8,808.6 540.8,804.4 564.5,800.0 590.3,795.1 618.8,789.8 650.3,783.9 684.5,777.5 720.8,770.7 758.8,763.6 798.1,756.2 838.2,748.8 878.6,741.5 918.9,734.3 959.7,727.2 1001.6,720.0 1044.4,712.8 1087.7,705.6 1131.2,698.4 1174.4,691.1 1217.1,683.9 1258.9,676.8 1301.6,669.4 1346.2,661.6 1391.4,653.6 1435.8,645.7 1478.1,638.2 1516.9,631.3 1551.0,625.2 1578.9,620.3 1599.6,616.7 1613.8,614.2 1623.1,612.6 1629.0,611.6 1633.0,610.9 1636.6,610.3 1641.4,609.6 1649.0,608.3 1658.3,606.7 1667.7,605.1 1677.1,603.6 1686.7,602.0 1696.6,600.3 1706.9,598.6 1717.6,596.8 1728.9,594.8 1741.1,592.6 1754.4,590.3 1768.2,587.8 1782.4,585.3 1796.5,582.7 1810.2,580.3 1823.1,577.9 1834.9,575.8 1846.0,573.8 1857.0,571.8 1867.5,569.9 1877.5,568.1 1886.6,566.5 1894.7,565.0 1901.6,563.8 1906.9,562.8" fill="none" stroke="#a86a4c" stroke-width="0.8"/>
<polyline points="0.6,899.0 11.3,897.9 25.3,896.6 42.0,895.0 60.6,893.2 80.5,891.3 101.0,889.1 121.3,886.7 140.8,884.2 160.1,881.5 180.0,878.4 200.4,875.1 221.0,871.7 241.6,868.2 262.0,864.7 281.9,861.4 301.0,858.2 319.2,855.3 336.4,852.6 353.2,850.0 369.7,847.4 386.4,844.7 403.7,841.9 421.8,838.9 441.1,835.6 460.9,832.1 480.5,828.5 500.5,824.8 521.2,820.9 543.1,816.8 566.8,812.3 592.6,807.5 621.2,802.2 652.6,796.3 686.8,789.9 723.1,783.1 761.2,775.9 800.4,768.6 840.5,761.2 880.9,753.9 921.1,746.7 961.8,739.6 1003.7,732.5 1046.5,725.3 1089.8,718.0 1133.2,710.8 1176.5,703.6 1219.2,696.4 1261.1,689.2 1303.7,681.8 1348.4,674.0 1393.5,666.0 1438.0,658.1 1480.3,650.6 1519.1,643.7 1553.2,637.6 1581.1,632.7 1601.7,629.1 1615.9,626.6 1625.2,625.0 1631.0,624.0 1635.0,623.4 1638.7,622.8 1643.5,622.0 1651.0,620.7 1660.4,619.1 1669.7,617.6 1679.2,616.0 1688.8,614.4 1698.7,612.7 1709.0,611.0 1719.8,609.2 1731.1,607.2 1743.3,605.1 1756.6,602.7 1770.5,600.2 1784.6,597.7 1798.7,595.1 1812.4,592.7 1825.3,590.3 1837.1,588.2 1848.2,586.2 1859.2,584.2 1869.8,582.3 1879.7,580.5 1888.9,578.9 1897.0,577.4 1903.8,576.2 1909.1,575.2" fill="none" stroke="#a86a4c" stroke-width="0.8"/>
<polyline points="0.0,923.7 10.7,922.7 24.7,921.3 41.4,919.8 60.0,918.0 79.9,916.1 100.3,914.0 120.6,911.8 140.0,909.5 159.2,907.1 179.1,904.5 199.4,901.8 220.0,899.0 240.6,896.0 260.9,893.0 280.8,889.9 300.0,886.8 318.2,883.6 335.5,880.4 352.2,877.2 368.8,873.8 385.4,870.4 402.7,866.9 420.7,863.2 440.0,859.5 459.8,855.8 479.4,852.1 499.3,848.4 520.0,844.6 542.0,840.5 565.6,836.1 591.5,831.4 620.0,826.1 651.5,820.3 685.6,813.9 722.0,807.2 760.0,800.1 799.3,792.9 839.4,785.5 879.8,778.0 920.0,770.7 960.7,763.3 1002.7,755.7 1045.4,748.0 1088.8,740.2 1132.2,732.4 1175.5,724.7 1218.2,717.0 1260.0,709.6 1302.3,702.1 1346.1,694.4 1390.3,686.7 1433.8,679.0 1475.5,671.7 1514.5,664.9 1549.7,658.7 1580.0,653.3 1604.5,648.9 1623.7,645.3 1638.9,642.4 1651.5,639.9 1662.6,637.7 1673.6,635.6 1685.6,633.4 1700.0,630.8 1716.7,627.9 1734.4,625.0 1752.6,621.9 1771.0,619.0 1789.0,616.1 1806.1,613.3 1822.0,610.8 1836.0,608.5 1848.6,606.5 1860.2,604.6 1870.9,602.9 1880.5,601.4 1889.1,600.0 1896.6,598.8 1902.9,597.8 1908.0,597.0" fill="none" stroke="#e39468" stroke-width="13.4" stroke-linejoin="round"/>
<polyline points="-0.6,917.4 10.1,916.4 24.1,915.1 40.8,913.5 59.4,911.7 79.3,909.8 99.7,907.7 119.9,905.5 139.2,903.2 158.4,900.9 178.2,898.3 198.6,895.6 219.1,892.7 239.7,889.8 260.0,886.8 279.8,883.7 299.0,880.6 317.1,877.4 334.3,874.3 351.0,871.0 367.5,867.6 384.2,864.2 401.4,860.7 419.5,857.1 438.8,853.3 458.6,849.6 478.2,845.9 498.1,842.2 518.9,838.4 540.8,834.3 564.5,829.9 590.3,825.2 618.9,819.9 650.3,814.1 684.5,807.7 720.8,801.0 758.9,793.9 798.2,786.7 838.2,779.3 878.6,771.9 918.9,764.5 959.6,757.1 1001.5,749.5 1044.3,741.8 1087.6,734.0 1131.1,726.2 1174.4,718.5 1217.1,710.8 1258.9,703.4 1301.2,695.9 1345.0,688.2 1389.2,680.4 1432.7,672.8 1474.4,665.5 1513.4,658.7 1548.6,652.5 1578.9,647.1 1603.3,642.7 1622.5,639.1 1637.7,636.2 1650.3,633.7 1661.4,631.6 1672.4,629.4 1684.5,627.2 1698.9,624.6 1715.6,621.7 1733.3,618.7 1751.6,615.7 1770.0,612.7 1788.0,609.8 1805.1,607.1 1821.0,604.5 1835.0,602.3 1847.6,600.2 1859.2,598.4 1869.9,596.7 1879.5,595.1 1888.1,593.8 1895.6,592.6 1901.9,591.6 1907.0,590.8" fill="none" stroke="#a86a4c" stroke-width="0.8"/>
<polyline points="0.6,930.0 11.3,928.9 25.3,927.6 42.0,926.1 60.6,924.3 80.5,922.3 101.0,920.2 121.3,918.0 140.8,915.8 160.0,913.4 179.9,910.8 200.3,908.1 220.9,905.2 241.5,902.3 261.9,899.2 281.8,896.1 301.0,893.0 319.3,889.9 336.6,886.6 353.4,883.3 370.0,880.0 386.7,876.6 403.9,873.0 421.9,869.4 441.2,865.7 460.9,862.0 480.5,858.3 500.4,854.6 521.1,850.8 543.1,846.7 566.8,842.3 592.6,837.6 621.1,832.3 652.6,826.5 686.8,820.1 723.1,813.4 761.1,806.3 800.4,799.1 840.5,791.7 880.9,784.2 921.1,776.9 961.8,769.5 1003.8,761.9 1046.6,754.2 1089.9,746.4 1133.3,738.6 1176.6,730.9 1219.3,723.2 1261.1,715.8 1303.4,708.3 1347.2,700.6 1391.3,692.9 1434.8,685.2 1476.6,677.9 1515.6,671.1 1550.8,664.9 1581.1,659.5 1605.6,655.1 1624.9,651.5 1640.1,648.6 1652.7,646.1 1663.8,643.9 1674.7,641.8 1686.7,639.6 1701.1,637.0 1717.7,634.1 1735.4,631.2 1753.7,628.2 1772.0,625.2 1790.0,622.3 1807.1,619.5 1823.0,617.0 1837.0,614.7 1849.6,612.7 1861.2,610.8 1871.8,609.1 1881.5,607.6 1890.1,606.2 1897.5,605.0 1903.9,604.0 1909.0,603.2" fill="none" stroke="#a86a4c" stroke-width="0.8"/>
<text class="rl" font-size="11" transform="translate(1048,727) rotate(-10)" letter-spacing="1.6">I-10  W</text>
<text class="rl" font-size="11" transform="translate(659,795) rotate(-10)" letter-spacing="1.6">I-10  W</text>
<text class="rl" font-size="11" transform="translate(687,819) rotate(-10)" letter-spacing="1.6">I-10  E</text>
<polyline points="-0.2,890.6 10.5,889.6 24.5,888.2 41.2,886.7 59.8,884.9 79.7,882.9 100.1,880.7 120.3,878.4 139.7,875.9 158.9,873.2 178.7,870.1 199.1,866.9 219.7,863.4 240.2,859.9 260.6,856.5 280.5,853.1 299.7,849.9 317.9,847.0 335.1,844.3 351.9,841.7 368.4,839.1 385.1,836.4 402.3,833.7 420.4,830.6 439.6,827.3 459.4,823.8 479.0,820.3 498.9,816.6 519.6,812.7 541.6,808.6 565.2,804.1 591.1,799.2 619.6,793.9 651.1,788.1 685.2,781.7 721.6,774.8 759.6,767.7 798.9,760.4 839.0,753.0 879.4,745.6 919.6,738.4 960.4,731.3 1002.3,724.2 1045.1,717.0 1088.4,709.7 1131.9,702.5 1175.1,695.3 1217.8,688.1 1259.6,680.9 1302.3,673.5 1346.9,665.7 1392.1,657.7 1436.5,649.8 1478.8,642.3 1517.7,635.4 1551.7,629.4 1579.6,624.4 1600.3,620.8 1614.5,618.3 1623.8,616.7 1629.7,615.7 1633.7,615.1 1637.3,614.5 1642.1,613.7 1649.7,612.4 1659.0,610.9 1668.3,609.3 1677.8,607.7 1687.4,606.1 1697.3,604.5 1707.6,602.7 1718.3,600.9 1729.6,598.9 1741.9,596.8 1755.1,594.4 1769.0,591.9 1783.1,589.4 1797.2,586.9 1810.9,584.4 1823.8,582.1 1835.6,579.9 1846.7,577.9 1857.7,576.0 1868.3,574.0 1878.3,572.2 1887.4,570.6 1895.5,569.1 1902.3,567.9 1907.6,566.9" fill="none" stroke="#5290dc" stroke-width="4.4"/>
<polyline points="-0.3,889.6 10.4,888.6 24.4,887.2 41.1,885.7 59.7,883.9 79.6,881.9 100.0,879.7 120.2,877.4 139.6,874.9 158.7,872.2 178.6,869.2 198.9,865.9 219.5,862.4 240.1,858.9 260.4,855.5 280.3,852.1 299.5,848.9 317.7,846.0 335.0,843.3 351.7,840.7 368.3,838.1 385.0,835.5 402.2,832.7 420.2,829.7 439.5,826.3 459.2,822.8 478.8,819.3 498.7,815.6 519.4,811.7 541.4,807.6 565.1,803.1 590.9,798.3 619.4,793.0 650.9,787.1 685.1,780.7 721.4,773.8 759.4,766.7 798.7,759.4 838.8,752.0 879.2,744.6 919.5,737.4 960.2,730.3 1002.1,723.2 1044.9,716.0 1088.2,708.8 1131.7,701.5 1175.0,694.3 1217.7,687.1 1259.5,679.9 1302.1,672.5 1346.7,664.7 1391.9,656.7 1436.3,648.9 1478.6,641.3 1517.5,634.4 1551.6,628.4 1579.5,623.4 1600.1,619.8 1614.3,617.4 1623.6,615.8 1629.5,614.8 1633.5,614.1 1637.2,613.5 1642.0,612.7 1649.5,611.4 1658.8,609.9 1668.2,608.3 1677.6,606.7 1687.2,605.1 1697.1,603.5 1707.4,601.7 1718.2,599.9 1729.5,597.9 1741.7,595.8 1754.9,593.4 1768.8,591.0 1783.0,588.4 1797.0,585.9 1810.7,583.4 1823.6,581.1 1835.5,578.9 1846.6,576.9 1857.5,575.0 1868.1,573.1 1878.1,571.3 1887.2,569.6 1895.3,568.1 1902.1,566.9 1907.4,565.9" fill="none" stroke="#1b2b44" stroke-width="0.9" stroke-dasharray="3,3.5"/>
<polyline points="-0.1,891.7 10.6,890.6 24.6,889.3 41.3,887.8 59.9,886.0 79.8,884.0 100.2,881.8 120.5,879.5 139.9,877.0 159.0,874.3 178.9,871.2 199.3,867.9 219.8,864.5 240.4,861.0 260.8,857.5 280.7,854.2 299.8,851.0 318.0,848.1 335.3,845.4 352.1,842.8 368.6,840.2 385.3,837.5 402.5,834.7 420.6,831.7 439.8,828.4 459.6,824.9 479.2,821.3 499.1,817.7 519.8,813.8 541.8,809.6 565.4,805.2 591.3,800.3 619.8,795.0 651.3,789.2 685.4,782.7 721.8,775.9 759.8,768.8 799.1,761.4 839.2,754.0 879.6,746.7 919.8,739.5 960.6,732.4 1002.5,725.3 1045.3,718.1 1088.6,710.8 1132.0,703.6 1175.3,696.4 1218.0,689.2 1259.8,682.0 1302.5,674.6 1347.1,666.8 1392.3,658.8 1436.7,650.9 1479.0,643.4 1517.9,636.5 1551.9,630.4 1579.8,625.5 1600.5,621.9 1614.7,619.4 1624.0,617.8 1629.8,616.8 1633.8,616.2 1637.5,615.6 1642.3,614.8 1649.8,613.5 1659.2,611.9 1668.5,610.4 1678.0,608.8 1687.6,607.2 1697.5,605.5 1707.8,603.8 1718.5,602.0 1729.8,600.0 1742.1,597.9 1755.3,595.5 1769.2,593.0 1783.3,590.5 1797.4,587.9 1811.1,585.5 1824.0,583.1 1835.8,581.0 1846.9,579.0 1857.9,577.0 1868.5,575.1 1878.4,573.3 1887.6,571.7 1895.7,570.2 1902.5,569.0 1907.8,568.0" fill="none" stroke="#dfe8f8" stroke-width="1" stroke-dasharray="3,3" stroke-dashoffset="3"/>
<polyline points="-0.2,921.6 10.5,920.6 24.5,919.3 41.2,917.7 59.8,915.9 79.7,914.0 100.1,911.9 120.4,909.7 139.7,907.4 158.9,905.0 178.8,902.4 199.1,899.7 219.7,896.9 240.3,893.9 260.6,890.9 280.5,887.8 299.7,884.7 317.8,881.6 335.1,878.4 351.8,875.1 368.3,871.8 385.0,868.3 402.2,864.8 420.3,861.2 439.6,857.4 459.4,853.7 479.0,850.0 498.9,846.3 519.6,842.5 541.6,838.4 565.2,834.1 591.1,829.3 619.6,824.0 651.1,818.2 685.2,811.9 721.6,805.1 759.6,798.1 798.9,790.8 839.0,783.4 879.4,776.0 919.6,768.6 960.3,761.2 1002.3,753.6 1045.1,745.9 1088.4,738.1 1131.8,730.3 1175.1,722.6 1217.8,715.0 1259.6,707.5 1302.0,700.0 1345.7,692.3 1389.9,684.6 1433.4,677.0 1475.2,669.7 1514.2,662.8 1549.3,656.6 1579.6,651.2 1604.1,646.8 1623.3,643.2 1638.5,640.3 1651.1,637.9 1662.2,635.7 1673.2,633.6 1685.2,631.3 1699.6,628.7 1716.3,625.9 1734.0,622.9 1752.3,619.9 1770.7,616.9 1788.7,614.0 1805.8,611.2 1821.6,608.7 1835.7,606.4 1848.2,604.4 1859.9,602.5 1870.5,600.8 1880.2,599.3 1888.8,597.9 1896.2,596.7 1902.6,595.7 1907.7,594.9" fill="none" stroke="#5290dc" stroke-width="4.4"/>
<polyline points="-0.3,920.6 10.4,919.6 24.4,918.3 41.1,916.7 59.7,914.9 79.6,913.0 100.0,910.9 120.2,908.7 139.6,906.4 158.8,904.0 178.7,901.5 199.0,898.7 219.6,895.9 240.1,893.0 260.5,889.9 280.3,886.9 299.5,883.7 317.6,880.6 334.9,877.4 351.6,874.1 368.1,870.8 384.8,867.3 402.0,863.8 420.1,860.2 439.4,856.5 459.2,852.7 478.8,849.0 498.7,845.3 519.4,841.5 541.4,837.5 565.1,833.1 590.9,828.3 619.4,823.1 650.9,817.2 685.1,810.9 721.4,804.1 759.4,797.1 798.7,789.8 838.8,782.4 879.2,775.0 919.4,767.7 960.2,760.3 1002.1,752.7 1044.9,744.9 1088.2,737.2 1131.7,729.4 1174.9,721.6 1217.6,714.0 1259.5,706.5 1301.8,699.0 1345.6,691.3 1389.7,683.6 1433.2,676.0 1475.0,668.7 1514.0,661.8 1549.2,655.6 1579.5,650.2 1603.9,645.8 1623.1,642.2 1638.4,639.3 1650.9,636.9 1662.0,634.7 1673.0,632.6 1685.0,630.3 1699.5,627.7 1716.2,624.9 1733.9,621.9 1752.1,618.9 1770.5,615.9 1788.5,613.0 1805.6,610.3 1821.5,607.7 1835.5,605.4 1848.1,603.4 1859.7,601.5 1870.4,599.8 1880.0,598.3 1888.6,596.9 1896.1,595.8 1902.4,594.8 1907.5,593.9" fill="none" stroke="#1b2b44" stroke-width="0.9" stroke-dasharray="3,3.5"/>
<polyline points="-0.1,922.7 10.6,921.7 24.6,920.4 41.3,918.8 59.9,917.0 79.8,915.1 100.2,913.0 120.5,910.8 139.9,908.5 159.1,906.1 178.9,903.5 199.3,900.8 219.9,898.0 240.4,895.0 260.8,892.0 280.7,888.9 299.8,885.8 318.0,882.7 335.3,879.5 352.0,876.2 368.6,872.8 385.2,869.4 402.5,865.9 420.5,862.3 439.8,858.5 459.6,854.8 479.2,851.1 499.1,847.4 519.8,843.6 541.8,839.5 565.4,835.2 591.3,830.4 619.8,825.1 651.3,819.3 685.4,812.9 721.8,806.2 759.8,799.1 799.1,791.9 839.2,784.5 879.6,777.1 919.8,769.7 960.5,762.3 1002.5,754.7 1045.3,747.0 1088.6,739.2 1132.0,731.4 1175.3,723.7 1218.0,716.1 1259.8,708.6 1302.2,701.1 1345.9,693.4 1390.1,685.7 1433.6,678.1 1475.4,670.7 1514.4,663.9 1549.5,657.7 1579.8,652.3 1604.3,647.9 1623.5,644.3 1638.8,641.4 1651.3,638.9 1662.4,636.8 1673.4,634.6 1685.4,632.4 1699.8,629.8 1716.5,626.9 1734.2,624.0 1752.5,621.0 1770.8,618.0 1788.8,615.1 1806.0,612.3 1821.8,609.8 1835.8,607.5 1848.4,605.5 1860.0,603.6 1870.7,601.9 1880.3,600.4 1888.9,599.0 1896.4,597.8 1902.7,596.8 1907.8,596.0" fill="none" stroke="#dfe8f8" stroke-width="1" stroke-dasharray="3,3" stroke-dashoffset="3"/>
<polyline points="1265.0,678.4 1482.0,614.4" fill="none" stroke="#f0303a" stroke-width="1.6"/>
<polyline points="1482.0,614.0 1580.0,578.5 1700.0,551.0 1868.0,525.0 1908.0,523.0" fill="none" stroke="#f0303a" stroke-width="1" stroke-opacity="0.8"/>
<path d="M0.0,855.0 L160.0,842.0 L170.8,840.2 L185.2,837.7 L202.2,834.7 L221.2,831.5 L241.3,828.1 L261.7,824.6 L281.5,821.4 L300.0,818.5 L317.2,815.9 L334.1,813.6 L350.7,811.4 L367.5,809.2 L384.6,807.0 L402.2,804.6 L420.6,801.9 L440.0,799.0 L459.8,795.8 L479.4,792.6 L499.3,789.3 L520.0,785.7 L542.0,781.9 L565.6,777.8 L591.5,773.3 L620.0,768.3 L653.4,762.5 L692.2,755.7 L734.3,748.3 L777.5,740.7 L819.8,733.3 L859.1,726.3 L893.2,720.3 L920.0,715.5 L938.5,712.1 L950.1,710.0 L956.8,708.6 L960.4,707.8 L962.6,707.2 L965.4,706.5 L970.6,705.4 L980.0,703.5 L993.4,700.9 L1009.0,698.1 L1026.1,695.0 L1044.1,691.6 L1062.5,688.2 L1080.7,684.6 L1098.1,681.0 L1114.0,677.5 L1127.9,674.2 L1140.3,671.1 L1151.7,668.1 L1162.9,664.9 L1174.6,661.5 L1187.5,657.6 L1202.4,653.0 L1220.0,647.5 L1241.9,640.6 L1268.1,632.2 L1296.9,622.8 L1326.6,613.1 L1355.5,603.7 L1381.9,595.0 L1403.9,587.8 L1420.0,582.5 Q1454,571 1467,585 Q1474,595 1476,614" fill="none" stroke="#8c8c8c" stroke-width="9.2" stroke-linejoin="round" stroke-linecap="butt"/>
<path d="M0.0,855.0 L160.0,842.0 L170.8,840.2 L185.2,837.7 L202.2,834.7 L221.2,831.5 L241.3,828.1 L261.7,824.6 L281.5,821.4 L300.0,818.5 L317.2,815.9 L334.1,813.6 L350.7,811.4 L367.5,809.2 L384.6,807.0 L402.2,804.6 L420.6,801.9 L440.0,799.0 L459.8,795.8 L479.4,792.6 L499.3,789.3 L520.0,785.7 L542.0,781.9 L565.6,777.8 L591.5,773.3 L620.0,768.3 L653.4,762.5 L692.2,755.7 L734.3,748.3 L777.5,740.7 L819.8,733.3 L859.1,726.3 L893.2,720.3 L920.0,715.5 L938.5,712.1 L950.1,710.0 L956.8,708.6 L960.4,707.8 L962.6,707.2 L965.4,706.5 L970.6,705.4 L980.0,703.5 L993.4,700.9 L1009.0,698.1 L1026.1,695.0 L1044.1,691.6 L1062.5,688.2 L1080.7,684.6 L1098.1,681.0 L1114.0,677.5 L1127.9,674.2 L1140.3,671.1 L1151.7,668.1 L1162.9,664.9 L1174.6,661.5 L1187.5,657.6 L1202.4,653.0 L1220.0,647.5 L1241.9,640.6 L1268.1,632.2 L1296.9,622.8 L1326.6,613.1 L1355.5,603.7 L1381.9,595.0 L1403.9,587.8 L1420.0,582.5 Q1454,571 1467,585 Q1474,595 1476,614" fill="none" stroke="#fdfdfd" stroke-width="7.6" stroke-linejoin="round" stroke-linecap="butt"/>
<path d="M-0.3,850.9 L159.5,837.9 L170.1,836.1 L184.5,833.6 L201.6,830.7 L220.6,827.4 L240.7,824.0 L261.1,820.6 L280.9,817.4 L299.4,814.4 L316.6,811.9 L333.5,809.5 L350.2,807.3 L367.0,805.1 L384.0,802.9 L401.6,800.5 L420.0,797.9 L439.4,794.9 L459.1,791.8 L478.7,788.6 L498.6,785.2 L519.3,781.7 L541.3,777.9 L564.9,773.8 L590.8,769.2 L619.3,764.3 L652.7,758.4 L691.5,751.7 L733.5,744.3 L776.8,736.7 L819.1,729.2 L858.3,722.3 L892.4,716.3 L919.3,711.5 L937.7,708.1 L949.4,705.9 L956.0,704.6 L959.4,703.8 L961.6,703.3 L964.5,702.5 L969.8,701.4 L979.2,699.5 L992.6,696.9 L1008.2,694.0 L1025.3,690.9 L1043.4,687.6 L1061.8,684.1 L1079.9,680.6 L1097.2,677.0 L1113.1,673.5 L1127.0,670.2 L1139.2,667.1 L1150.6,664.1 L1161.7,661.0 L1173.4,657.6 L1186.3,653.6 L1201.2,649.0 L1218.8,643.6 L1240.6,636.7 L1266.8,628.3 L1295.6,618.9 L1325.3,609.2 L1354.2,599.8 L1380.6,591.1 L1402.7,583.9 L1418.7,578.6 Q1458,565 1471,581 Q1479,593 1481.5,613" fill="none" stroke="#333" stroke-width="1" stroke-dasharray="3,2" stroke-opacity="0.7"/>
<path d="M1323,611 L1431,583.3 Q1452,578 1461,594 Q1466,604 1466.7,615" fill="none" stroke="#f69296" stroke-width="1"/>
<path d="M1006.2,40 L1006.2,112 Q1006.2,142.5 1030,142.5 L1090,142.5 Q1106.5,142.5 1106.5,165 L1107,386 L1110.5,560 L1112.5,675" fill="none" stroke="#8c8c8c" stroke-width="8.6" stroke-linejoin="round" stroke-linecap="butt"/>
<path d="M1006.2,40 L1006.2,112 Q1006.2,142.5 1030,142.5 L1090,142.5 Q1106.5,142.5 1106.5,165 L1107,386 L1110.5,560 L1112.5,675" fill="none" stroke="#fdfdfd" stroke-width="7" stroke-linejoin="round" stroke-linecap="butt"/>
<path d="M1799,537 Q1812,505 1840,501 L1908,498.6" fill="none" stroke="#8c8c8c" stroke-width="10.6" stroke-linejoin="round" stroke-linecap="butt"/>
<path d="M1799,537 Q1812,505 1840,501 L1908,498.6" fill="none" stroke="#fdfdfd" stroke-width="9" stroke-linejoin="round" stroke-linecap="butt"/>
<path d="M889,946 L900.5,885.5 L912.3,850.2 L946,832.6 L998.9,850.2 L1016.5,903 L979.8,946" fill="none" stroke="#8c8c8c" stroke-width="7.199999999999999" stroke-linejoin="round" stroke-linecap="butt"/>
<path d="M889,946 L900.5,885.5 L912.3,850.2 L946,832.6 L998.9,850.2 L1016.5,903 L979.8,946" fill="none" stroke="#fdfdfd" stroke-width="5.6" stroke-linejoin="round" stroke-linecap="butt"/>
<path d="M894.7,946 Q896,938.3 910,938.3 L976.9,938.3" fill="none" stroke="#8c8c8c" stroke-width="6.6" stroke-linejoin="round" stroke-linecap="butt"/>
<path d="M894.7,946 Q896,938.3 910,938.3 L976.9,938.3" fill="none" stroke="#fdfdfd" stroke-width="5" stroke-linejoin="round" stroke-linecap="butt"/>
<path d="M1474.6,859.4 L1688.8,859.4" fill="none" stroke="#8c8c8c" stroke-width="8.6" stroke-linejoin="round" stroke-linecap="butt"/>
<path d="M1474.6,859.4 L1688.8,859.4" fill="none" stroke="#fdfdfd" stroke-width="7" stroke-linejoin="round" stroke-linecap="butt"/>
<path d="M1539,859.4 L1539,812 Q1539,803 1548,803 L1630,803 L1655.4,852.5" fill="none" stroke="#8c8c8c" stroke-width="8.6" stroke-linejoin="round" stroke-linecap="butt"/>
<path d="M1539,859.4 L1539,812 Q1539,803 1548,803 L1630,803 L1655.4,852.5" fill="none" stroke="#fdfdfd" stroke-width="7" stroke-linejoin="round" stroke-linecap="butt"/>
<path d="M1697,834.4 L1908,831.6" fill="none" stroke="#8c8c8c" stroke-width="6.6" stroke-linejoin="round" stroke-linecap="butt"/>
<path d="M1697,834.4 L1908,831.6" fill="none" stroke="#fdfdfd" stroke-width="5" stroke-linejoin="round" stroke-linecap="butt"/>
<path d="M1761,845.5 Q1775,850 1772.2,874.7 Q1768,905.3 1741.6,905.3 L1705.5,905.3" fill="none" stroke="#8c8c8c" stroke-width="7.6" stroke-linejoin="round" stroke-linecap="butt"/>
<path d="M1761,845.5 Q1775,850 1772.2,874.7 Q1768,905.3 1741.6,905.3 L1705.5,905.3" fill="none" stroke="#fdfdfd" stroke-width="6" stroke-linejoin="round" stroke-linecap="butt"/>
<path d="M1243,868 L1243,946" fill="none" stroke="#8c8c8c" stroke-width="7.6" stroke-linejoin="round" stroke-linecap="butt"/>
<path d="M1243,868 L1243,946" fill="none" stroke="#fdfdfd" stroke-width="6" stroke-linejoin="round" stroke-linecap="butt"/>
<path d="M1332,879.6 L1332,946" fill="none" stroke="#8c8c8c" stroke-width="7.6" stroke-linejoin="round" stroke-linecap="butt"/>
<path d="M1332,879.6 L1332,946" fill="none" stroke="#fdfdfd" stroke-width="6" stroke-linejoin="round" stroke-linecap="butt"/>
<polygon points="1793.8,658 1908,648 1908,665 1818.3,681.5 1803.3,677.4" fill="#fdfdfd" stroke="#999" stroke-width="0.8"/>
<polyline points="980.0,707.2 1240.0,646.2 1440.0,586.0" fill="none" stroke="#f26470" stroke-width="1"/>
<polyline points="900.0,716.0 980.0,711.4 1240.0,673.8 1520.0,600.0" fill="none" stroke="#f26470" stroke-width="1" stroke-opacity="0.8"/>
<text x="134.0" y="93.0" class="lb">41412</text>
<text x="309.0" y="194.0" class="lb">41317</text>
<text x="610.5" y="153.3" class="lb">41318</text>
<text x="105.6" y="370.0" class="lb">41361</text>
<text x="392.6" y="521.0" class="lb">41350</text>
<text x="873.0" y="420.0" class="lb">41293</text>
<text x="73.5" y="741.5" class="lb">41298</text>
<text x="201.6" y="733.6" class="lb">68116</text>
<text x="377.0" y="713.7" class="lb">50250</text>
<text x="490.4" y="729.2" class="lb">68072</text>
<text x="698.6" y="719.1" class="lb">41358</text>
<text x="861.1" y="705.3" class="lb">49385</text>
<text x="715.3" y="897.2" class="lb">54840</text>
<text x="420.5" y="936.2" class="lb">51694</text>
<text x="954.1" y="876.2" class="lb">41290</text>
<text x="1044.3" y="91.0" class="lb">42887</text>
<text x="1110.5" y="91.0" class="lb">54624</text>
<text x="1172.4" y="91.0" class="lb">54625</text>
<text x="1245.9" y="89.2" class="lb">54626</text>
<text x="1324.4" y="91.0" class="lb">54628</text>
<text x="1390.3" y="92.1" class="lb">54629</text>
<text x="1440.2" y="169.6" class="lb">48171</text>
<text x="1261.0" y="274.1" class="lb">43046</text>
<text x="1537.0" y="149.6" class="lb">45113</text>
<text x="1546.3" y="321.0" class="lb">48843</text>
<text x="1499.0" y="377.0" class="lb">86369</text>
<text x="1499.0" y="429.6" class="lb">84360</text>
<text x="1468.7" y="468.0" class="lb">42910</text>
<text x="1603.6" y="466.0" class="lb">45393</text>
<text x="1651.7" y="395.0" class="lb">62930</text>
<text x="1651.7" y="434.2" class="lb">45394</text>
<text x="1762.4" y="462.0" class="lb">55997</text>
<text x="1863.4" y="426.0" class="lb">56688</text>
<text x="1534.3" y="505.5" class="lb">42930</text>
<text x="1652.3" y="515.2" class="lb">45390</text>
<text x="1737.3" y="518.0" class="lb">45392</text>
<text x="1209.5" y="514.5" class="lb">43045</text>
<text x="1350.7" y="512.0" class="lb">47892</text>
<text x="1166.8" y="618.8" class="lb">43054</text>
<text x="1256.4" y="655.0" class="lb">49720</text>
<text x="1043.8" y="827.8" class="lb">52350</text>
<text x="1210.8" y="814.0" class="lb">45109</text>
<text x="1251.3" y="771.2" class="lb">45110</text>
<text x="1202.9" y="899.1" class="lb">77004</text>
<text x="1270.4" y="874.2" class="lb">45368</text>
<text x="1304.1" y="888.0" class="lb">45366</text>
<text x="1270.4" y="904.7" class="lb">45365</text>
<text x="1307.0" y="904.0" class="lb">45364</text>
<text x="1382.5" y="893.0" class="lb">45372</text>
<text x="1307.0" y="935.0" class="lb">45369</text>
<text x="1360.5" y="935.0" class="lb">45370</text>
<text x="1405.4" y="934.0" class="lb">45371</text>
<text x="1213.7" y="940.0" class="lb">45363</text>
<text x="1269.5" y="943.8" class="lb">45367</text>
<text x="1562.8" y="760.0" class="lb">45361</text>
<text x="1659.6" y="766.0" class="lb">45362</text>
<text x="1738.9" y="736.9" class="lb">45388</text>
<text x="1833.4" y="725.2" class="lb">47469</text>
<text x="1745.8" y="778.0" class="lb">70744</text>
<text x="1873.8" y="775.8" class="lb">62179</text>
<text x="1807.0" y="798.0" class="lb">61301</text>
<text x="1741.6" y="812.0" class="lb">47171</text>
<text x="1448.2" y="837.0" class="lb">45373</text>
<text x="1516.3" y="832.8" class="lb">57212</text>
<text x="1661.0" y="822.3" class="lb">45383</text>
<text x="1483.8" y="876.0" class="lb">45386</text>
<text x="1744.4" y="877.9" class="lb">47470</text>
<text x="1844.6" y="876.5" class="lb">58698</text>
<text x="1459.3" y="933.8" class="lb">45360</text>
<text x="1556.0" y="933.8" class="lb">46986</text>
<text x="1654.0" y="933.8" class="lb">45358</text>
<text x="1737.5" y="928.8" class="lb">58850</text>
<text x="1834.8" y="928.8" class="lb">58236</text>
<text x="1601.7" y="864.0" class="lb">45103</text>
<!-- area labels -->
<text class="rl" font-size="11" x="1489" y="505" letter-spacing="1.6" style="fill:#8a8a80">Vent</text>
<text x="505" y="489.5" class="bl" font-size="13" text-anchor="middle" style="fill:#5e5e5e">A-4</text>
<text x="505" y="505" class="bl" font-size="13" text-anchor="middle" style="fill:#5e5e5e">ANDERSON, E</text>
<text x="1455.3" y="490.5" class="bl" font-size="13" text-anchor="middle" style="fill:#5e5e5e">A-120</text>
<text x="1454.7" y="505.5" class="bl" font-size="13" text-anchor="middle" style="fill:#5e5e5e">ALMANSUR, Y</text>
<text x="1709.8" y="648" class="bl" font-size="16" text-anchor="middle" style="fill:#765000">City of</text>
<text x="1708.5" y="665.8" class="bl" font-size="16" text-anchor="middle" style="fill:#765000">Schlenburg</text>
<!-- road labels -->
<text class="rl" font-size="11" transform="translate(1446,660) rotate(-10)" letter-spacing="1.6">I-10  W</text>
<text class="rl" font-size="11" transform="translate(1851,585.5) rotate(-10)" letter-spacing="2">I-10  W</text>
<text class="rl" font-size="11" transform="translate(1836,611) rotate(-10)" letter-spacing="1.6">I-10  E</text>
<text class="rl" font-size="11" transform="translate(257,868) rotate(-9)" letter-spacing="1.6">I-10  W</text>
<text class="rl" font-size="11" transform="translate(153,914) rotate(-8)" letter-spacing="1.6">I-10  E</text>
<text class="bl" font-size="11.5" transform="translate(1101.5,351) rotate(-90)" letter-spacing="0.5">HERTEL RD</text>
<text class="bl" font-size="12" transform="translate(1700.5,806) rotate(-90)" letter-spacing="0.3">N KESSLER AVE</text>
<text class="bl" font-size="12.5" transform="translate(1806,680) rotate(-7)" letter-spacing="0.4">HUSER BLVD</text>
<text class="bl" font-size="12.5" x="1760" y="839" letter-spacing="0.4">HEINRICH ST</text>
<text class="bl" font-size="12.5" x="1535.8" y="853.5" text-anchor="middle">MISH MASH</text>
<text class="bl" font-size="12.5" x="1535.8" y="870" text-anchor="middle">MALL LN</text>
<text class="bl" font-size="12" transform="translate(988,935) rotate(-72)" letter-spacing="0.3">LLOYD LN</text>
<text class="rl" font-size="11" transform="translate(290,827) rotate(-10)" letter-spacing="1.6">W  I-10  Frontage  Rd</text>
<text class="rl" font-size="11" transform="translate(817,741) rotate(-10)" letter-spacing="1.6">W  I-10  Frontage  Rd</text>
<text class="rl" font-size="11" transform="translate(1250,645) rotate(-15)" letter-spacing="1.6">W  I-10  Frontage  Rd</text>
<text class="rl" font-size="11" transform="translate(1527,606) rotate(-15)" letter-spacing="1.6">W  I-10  Frontage  Rd</text>
<text class="rl" font-size="11" x="1837" y="505" letter-spacing="1.6">E  I-10  Fron</text>
<text class="rl" font-size="11" x="1055" y="149" letter-spacing="1.2">Hertel</text>
<text class="rl" font-size="11" transform="translate(1107,573) rotate(90)" letter-spacing="1">Hertel</text>
<text class="rl" font-size="11" transform="translate(1697,613) rotate(-90)" letter-spacing="1">US 77</text>
<text class="rl" font-size="11" transform="translate(1700,900) rotate(-90)" letter-spacing="1">US-77</text>
<text class="rl" font-size="11" transform="translate(899,906) rotate(-67)" letter-spacing="1.3">Country</text>
<text class="rl" font-size="11" transform="translate(914,855) rotate(-31)" letter-spacing="1.3">Road</text>
<text class="rl" font-size="11" transform="translate(947,836) rotate(21)" letter-spacing="1.3">415</text>
<text class="rl" font-size="11.5" x="1622" y="809" style="fill:#555">Greyhound-</text>
<text class="rl" font-size="11.5" x="1622" y="821" style="fill:#555">Schu</text>
<text class="rl" font-size="11" x="1542" y="863" letter-spacing="1" style="fill:#555">Mas</text>
<text class="rl" font-size="11" x="1631" y="862" letter-spacing="1.5" style="fill:#555">ll  Ln</text>
<text class="rl" font-size="11" transform="translate(1712,908) rotate(-20)" letter-spacing="1" style="fill:#555">Heinrich St</text>
<text class="rl" font-size="10" transform="translate(1102,152) rotate(55)" letter-spacing="0.5">Rd</text>
<text class="lb" x="1812" y="161" opacity="0.12">43009</text>
<text class="lb" x="1620" y="222" opacity="0.12">53499</text>
<text class="lb" x="1646" y="270" opacity="0.12">49659</text>
<text class="lb" x="1820" y="278" opacity="0.12">42994</text>
<text class="lb" x="1650" y="368" opacity="0.12">45106</text>
<text class="lb" x="1765" y="364" opacity="0.12">54345</text>
<text class="lb" x="1589" y="270" opacity="0.3">56349</text>
<!-- vertical parcel labels -->
<text class="lb" transform="translate(1905,752) rotate(-90)">68145</text>
<text class="lb" transform="translate(1905,914) rotate(-90)">823</text>
<text class="lb" x="1722" y="61">428</text>
<text class="lb" x="1831" y="60">42892</text>
<!-- shields -->
<g id="sh1">
  <path d="M946.5,727 h18 v9 q0,8 -9,10 q-9,-2 -9,-10z" fill="#1a30b0" stroke="#fff" stroke-width="1.2"/>
  <path d="M946.5,727 h18 v3.5 h-18z" fill="#d82020"/>
  <text x="955.5" y="741" font-family="Liberation Sans" font-weight="bold" font-size="10" fill="#fff" text-anchor="middle">10</text>
</g>
<g>
  <path d="M946.5,756.5 h18 v9 q0,8 -9,10 q-9,-2 -9,-10z" fill="#1a30b0" stroke="#fff" stroke-width="1.2"/>
  <path d="M946.5,756.5 h18 v3.5 h-18z" fill="#d82020"/>
  <text x="955.5" y="770.5" font-family="Liberation Sans" font-weight="bold" font-size="10" fill="#fff" text-anchor="middle">10</text>
</g>
<g opacity="0.6">
  <path d="M1097,729 h18 v9 q0,8 -9,10 q-9,-2 -9,-10z" fill="#2a50a0" stroke="#fff" stroke-width="1"/>
  <path d="M1097,729 h18 v3.5 h-18z" fill="#d82020"/>
</g>
<g opacity="0.6">
  <path d="M527.5,829 h18 v9 q0,8 -9,10 q-9,-2 -9,-10z" fill="#2a50a0" stroke="#fff" stroke-width="1"/>
  <path d="M527.5,829 h18 v3.5 h-18z" fill="#d82020"/>
</g>
<g opacity="0.6">
  <path d="M1624,633 h18 v9 q0,8 -9,10 q-9,-2 -9,-10z" fill="#2a50a0" stroke="#fff" stroke-width="1"/>
  <path d="M1624,633 h18 v3.5 h-18z" fill="#d82020"/>
</g>
<rect x="1323" y="694" width="19" height="11" fill="#c4d4b0" stroke="#8a9a78" stroke-width="0.6"/>
<text x="1332.5" y="703" font-family="Liberation Sans" font-size="9" fill="#555" text-anchor="middle">374</text>
<!-- bus icon -->
<rect x="1688" y="810" width="10" height="13" rx="1.5" fill="#eee" stroke="#888" stroke-width="0.8"/>

</svg>
</div>

<!-- nav controls -->
<svg style="position:absolute;left:0;top:40px" width="80" height="420" viewBox="0 40 80 420">
  <g opacity="0.95">
  <circle cx="40.1" cy="80.6" r="29.3" fill="#c6c4ae"/>
  <circle cx="41.1" cy="81.1" r="13.6" fill="none" stroke="#f2f0da" stroke-width="1.4"/>
  <defs><radialGradient id="eg" cx="0.45" cy="0.35" r="0.7"><stop offset="0" stop-color="#a8d8e8"/><stop offset="0.6" stop-color="#4a90b0"/><stop offset="1" stop-color="#6a6a9a"/></radialGradient></defs>
  <circle cx="41.1" cy="81.1" r="8.2" fill="url(#eg)"/>
  <path d="M36,76 q3,-3 6,-1 q0,3 -3,4 q-2,2 -1,5 q-3,-1 -3,-4z M44,80 q3,-1 4,2 q-2,3 -4,2z M38,86 q2,1 4,2 q-3,1 -4,-2z" fill="#8ec050" opacity="0.85"/>
  <path d="M36.4,59.6 L41.1,53.4 L45.8,59.6 M36.4,102 L41.1,107.8 L45.8,102 M20.2,76.4 L13.4,81.1 L20.2,85.8 M61.5,76.4 L67.8,81.1 L61.5,85.8" fill="none" stroke="#f2f0da" stroke-width="1.6"/>
  <path d="M24.9,115.1 L38.5,119.8 L39.5,131.8 L26.5,137.6 Q22.5,126.6 24.9,115.1z" fill="#c6c4ae"/>
  <path d="M55.7,115.1 L41.6,119.8 L41.6,131.8 L55.7,137.6 Q58.5,126.6 55.7,115.1z" fill="#c6c4ae"/>
  <path d="M32.7,121.4 L25.9,126.6 L32.7,131.3 M48.4,121.4 L55.2,126.6 L48.4,131.3" fill="none" stroke="#f2f0da" stroke-width="1.6"/>
  <rect x="28.8" y="141.1" width="22.8" height="168.5" rx="3" fill="#c9c7b0"/>
  <circle cx="40.7" cy="151.4" r="5" fill="#b5b39c" stroke="#e9e7d2" stroke-width="1"/>
  <path d="M38,151.4 h5.4 M40.7,148.7 v5.4" stroke="#f1efdc" stroke-width="1.4"/>
  <rect x="41.7" y="165.7" width="3.4" height="119.3" rx="1.5" fill="#eeecd6"/>
  <path d="M33.2,170 V286" stroke="#e9e7d2" stroke-width="1.6" stroke-dasharray="1.2,3.6"/>
  <circle cx="43.4" cy="180" r="5.2" fill="#e6e4cf" stroke="#d0ceb8" stroke-width="0.8"/>
  <circle cx="40.7" cy="298.7" r="5" fill="#b5b39c" stroke="#e9e7d2" stroke-width="1"/>
  <path d="M38,298.7 h5.4" stroke="#f1efdc" stroke-width="1.4"/>
  <rect x="28.8" y="317.4" width="23.8" height="80" rx="3" fill="#c9c7b0"/>
  <rect x="30" y="318.6" width="21.6" height="25" rx="2.5" fill="#a9a792" stroke="#f2f0de" stroke-width="1.8"/>
  <path d="M36.5,336 q-2,-4 -1.5,-7 v-4 q1,-1 2,0 v4 v-6 q1,-1 2,0 v6 v-7 q1,-1 2,0 v7 v-6 q1,-1 2,0 v7 l1.5,-2 q1,-1 2,0 l-3,6 q-1,2 -3,2z" fill="#f7f5e6"/>
  <circle cx="39.5" cy="354" r="4.5" fill="#b9b7a0" stroke="#e9e7d2" stroke-width="1.2"/>
  <path d="M37,354 h5 M39.5,351.5 v5" stroke="#f1efdc" stroke-width="1.2"/>
  <path d="M43,358 l3.5,3.5" stroke="#8a8878" stroke-width="1.5"/>
  <circle cx="39.5" cy="381" r="4.5" fill="#b9b7a0" stroke="#e9e7d2" stroke-width="1.2"/>
  <path d="M37,381 h5" stroke="#f1efdc" stroke-width="1.2"/>
  <path d="M43,385 l3.5,3.5" stroke="#8a8878" stroke-width="1.5"/>
  </g>
  <defs><radialGradient id="gb" cx="0.4" cy="0.35" r="0.7"><stop offset="0" stop-color="#fbfbfb"/><stop offset="0.55" stop-color="#c4c4c0"/><stop offset="1" stop-color="#858580"/></radialGradient></defs>
  <circle cx="40.7" cy="436.5" r="15.5" fill="url(#gb)"/>
  <rect x="29" y="424" width="15" height="15" rx="1" fill="#f2f2f0" stroke="#8a8a88" stroke-width="1"/>
  <rect x="29.5" y="424.5" width="14" height="3" fill="#bbb"/>
  <rect x="31" y="432" width="9" height="5" fill="#fff" stroke="#666" stroke-width="0.8"/><rect x="33" y="433" width="2" height="3" fill="#555"/>
</svg>

<div id="basemap">
  <svg style="position:absolute;left:9px;top:7px" width="17" height="16" viewBox="0 0 17 16">
    <rect x="0" y="0" width="7" height="7" fill="#c8a830" stroke="#6a5a20" stroke-width="0.8"/>
    <rect x="9" y="0" width="7" height="7" fill="#7ac0e0" stroke="#2a5a80" stroke-width="0.8"/>
    <rect x="0" y="8.5" width="7" height="7" fill="#5a80b0" stroke="#2a4070" stroke-width="0.8"/>
    <rect x="9" y="8.5" width="7" height="7" fill="#6aa040" stroke="#3a6020" stroke-width="0.8"/>
  </svg>
  <span>Basemap Selector</span>
</div>

<div id="hdr">
  <svg id="globe" viewBox="0 0 40 40">
    <circle cx="20" cy="20" r="19.6" fill="#0d4a80"/>
    <path d="M20,0.4 A19.6,19.6 0 0 1 20,39.6" fill="#0a3f70"/>
    <circle cx="20" cy="20" r="13.8" fill="none" stroke="#fff" stroke-width="1.7"/>
    <ellipse cx="20" cy="20" rx="6.3" ry="13.8" fill="none" stroke="#fff" stroke-width="1.4"/>
    <line x1="20" y1="6.2" x2="20" y2="33.8" stroke="#fff" stroke-width="1.4"/>
    <line x1="6.2" y1="20" x2="33.8" y2="20" stroke="#fff" stroke-width="1.4"/>
    <path d="M8.5,13 H31.5 M8.5,27 H31.5" stroke="#fff" stroke-width="1.3"/>
  </svg>
  <div id="title">Fayette County Appraisal District Interactive Map</div>
  <div id="sub">By: BIS Consulting - version 3.6.1</div>
  <svg id="tools" viewBox="900 0 270 40">
    <!-- binoculars -->
    <g>
      <path d="M912,11 L921,8 L931,10 L933,17 L927,21 L916,17z" fill="#1c1c1c"/>
      <path d="M906,17 L920,10.5 L925,17 L911,24z" fill="#2e2e2e"/>
      <path d="M918,24 L930,17 L934,23 L922,30z" fill="#2e2e2e"/>
      <ellipse cx="909.5" cy="20.5" rx="3.3" ry="3.8" transform="rotate(-30 909.5 20.5)" fill="#111"/>
      <ellipse cx="909.8" cy="20.5" rx="2" ry="2.4" transform="rotate(-30 909.8 20.5)" fill="#5ab0d0"/>
      <ellipse cx="922" cy="27" rx="3.3" ry="3.8" transform="rotate(-30 922 27)" fill="#111"/>
      <ellipse cx="922.3" cy="27" rx="2" ry="2.4" transform="rotate(-30 922.3 27)" fill="#5ab0d0"/>
    </g>
    <!-- printer -->
    <g>
      <rect x="957.8" y="9" width="7" height="7" fill="#4a8ad0" stroke="#2a5a90" stroke-width="0.6"/>
      <path d="M947,16 L966,15 L968,18 L968,25 L949,26 L947,23z" fill="#3a72b8"/>
      <path d="M962,17 L968,16.5 L968,25 L962,26z" fill="#d8c8a8"/>
      <path d="M945,24 L957,22.5 L960,27 L947,28z" fill="#e8f4f8" stroke="#a0b8c0" stroke-width="0.5"/>
      <path d="M949,18.5 L961,18" stroke="#9ac4ec" stroke-width="1"/>
    </g>
    <!-- book -->
    <g>
      <path d="M981.4,11 L992,8.6 L992,28 L981.4,30.3z" fill="#a83a3a"/>
      <path d="M983,13 L990,11 L990,15 L983,17z" fill="#c86060" opacity="0.6"/>
      <path d="M992,8.6 L1004,10 L1004,29 L992,28z" fill="#eeeeee"/>
      <path d="M994,12 L1002,13 M994,15 L1002,16 M994,18 L1002,19 M994,21 L1002,22 M994,24 L1002,25" stroke="#c8c8c8" stroke-width="0.8"/>
      <rect x="1003.3" y="12" width="2" height="3.5" fill="#d03030"/>
      <rect x="1003.3" y="16" width="2" height="3.5" fill="#30b030"/>
      <rect x="1003.3" y="20" width="2" height="3.5" fill="#e08020"/>
      <rect x="1003.3" y="24" width="2" height="3.5" fill="#3050d0"/>
    </g>
    <!-- pencil -->
    <g>
      <path d="M1019,30 L1040,9" stroke="#3a3a3a" stroke-width="1" opacity="0.35" transform="translate(2,1)"/>
      <path d="M1020,29.5 L1040.5,9.5" stroke="#e8eef4" stroke-width="5.5" stroke-linecap="round"/>
      <path d="M1020,29.5 L1040.5,9.5" stroke="#9aa6b4" stroke-width="5.5" stroke-linecap="round" stroke-opacity="0.3"/>
      <path d="M1038.5,11.5 L1041.5,8.5" stroke="#2a7ad0" stroke-width="6" stroke-linecap="round"/>
      <path d="M1019,30.5 L1021.5,28" stroke="#2a6ad0" stroke-width="3" stroke-linecap="round"/>
      <path d="M1024,24 L1035,13.5" stroke="#555" stroke-width="1" stroke-dasharray="1,1"/>
    </g>
    <!-- arrows P -->
    <g>
      <path d="M1060,14 L1066,12.4 L1067.5,15.5 L1061,16z" fill="#4ab040"/>
      <path d="M1055.2,16.5 L1066,14.4 L1068,18.7 L1057,18.5z" fill="#2a80d0"/>
      <path d="M1058,22.6 L1062,18.3 L1070,19 L1070,22.6z" fill="#f0c030"/>
      <path d="M1064,21 L1075.8,23 L1065,26.9z" fill="#e83020"/>
      <path d="M1071,18.5 L1073,13 L1079,13 L1078.5,16.5 L1073,17" fill="none" stroke="#fff" stroke-width="1.6"/>
    </g>
    <!-- tools -->
    <g>
      <defs><radialGradient id="tg" cx="0.35" cy="0.3" r="0.8"><stop offset="0" stop-color="#ffffff"/><stop offset="0.55" stop-color="#cfcfcf"/><stop offset="1" stop-color="#5a5a5a"/></radialGradient></defs>
      <circle cx="1107.2" cy="14.7" r="11.8" fill="url(#tg)" stroke="#c0c0c0" stroke-width="0.8"/>
      <path d="M1096,26 L1118,4.5" stroke="#555" stroke-width="1.5"/>
      <path d="M1100,10 L1118,26" stroke="#444" stroke-width="1.3"/>
      <path d="M1095.4,4 L1104.5,13.5" stroke="#d82010" stroke-width="3.2" stroke-linecap="round"/>
      <path d="M1112,7 L1116,5.5 L1118.5,8.5 L1116.5,12 L1113,11z" fill="#1a1a1a"/>
      <path d="M1103,30.2 L1109,30.2 L1106,36z" fill="#fff"/>
    </g>
    <!-- layers -->
    <g>
      <path d="M1134,24.5 L1145,20 L1157,22.5 L1146,28.8z" fill="#2a8ad8"/>
      <path d="M1138,23 L1146,21.5 L1151,25 L1145,26z" fill="#40b040"/>
      <path d="M1134,19.5 L1145,15.5 L1157,18 L1146,23z" fill="#8ac4ec"/>
      <path d="M1134,15.5 L1145,11.5 L1157,14 L1146,19z" fill="#d4d8dc"/>
      <circle cx="1143" cy="14" r="0.9" fill="#e03030"/><circle cx="1148" cy="14.5" r="0.9" fill="#e03030"/><circle cx="1146" cy="17" r="0.9" fill="#e03030"/><circle cx="1151" cy="15" r="0.9" fill="#e03030"/>
      <rect x="1140" y="32.1" width="12.1" height="2" fill="#fff"/>
    </g>
  </svg>
  <div id="search"><span>Search By Full Address</span></div>
  <div class="lnk" style="left:1752px;top:2px;letter-spacing:0.2px;">Need Web Map Help?</div>
  <div class="lnk" style="left:1753px;top:22px;letter-spacing:0.25px;">Need GIS Data or Maps?</div>
</div>

<!-- BIS logo -->
<svg style="position:absolute;left:1720px;top:48px" width="185" height="24" viewBox="1720 48 185 24">
  <g transform="rotate(-45 1733.2 60.2)"><rect x="1724.5" y="48.5" width="17.4" height="23.4" rx="8.7" fill="#1d5096"/>
  <path d="M1724.5,58.5 H1742 M1733.2,48.5 V58.5" stroke="#f2f0cb" stroke-width="1.1"/></g>
  <circle cx="1755.6" cy="60" r="9.5" fill="#f1f0cc" stroke="#1d5096" stroke-width="1.6"/>
  <ellipse cx="1755.6" cy="60" rx="4.5" ry="9.5" fill="none" stroke="#1d5096" stroke-width="1"/>
  <path d="M1746.5,57 H1764.5 M1746.5,63 H1764.5 M1744.5,64 Q1756,54 1767,58" stroke="#1d5096" stroke-width="1.1" fill="none"/>
  <ellipse cx="1778.5" cy="60" rx="7.5" ry="9.6" fill="none" stroke="#1d5096" stroke-width="1.2"/>
  <path d="M1770,55 q-2,5 0,9 M1787,55 q2,5 0,9 M1777,66.5 L1785,66" stroke="#1d5096" stroke-width="1.4" fill="none"/>
  <circle cx="1776" cy="66.5" r="1.4" fill="none" stroke="#1d5096" stroke-width="0.9"/>
  <text x="1794" y="64.9" font-family="Liberation Sans" font-weight="bold" font-size="13.4" fill="#1d4f91" stroke="#1d4f91" stroke-width="0.7" textLength="103.5" lengthAdjust="spacingAndGlyphs">BIS CONSULTING</text>
</svg>

<div id="panel">
  <svg style="position:absolute;left:1px;top:1px" width="298" height="296" viewBox="1579 82 298 296">
    <circle cx="1864.5" cy="94.6" r="9.3" fill="#111" stroke="#eee" stroke-width="1.6"/>
    <path d="M1861.3,91.4 L1867.7,97.8 M1867.7,91.4 L1861.3,97.8" stroke="#fff" stroke-width="2"/>
    <rect x="1838" y="99.3" width="10" height="1.6" fill="#fff"/>
    <line x1="1843.8" y1="148" x2="1843.8" y2="347" stroke="#c8c8c8" stroke-width="1.5"/>
    <rect x="1841.3" y="221.3" width="5" height="65.4" fill="#1a1a1a" stroke="#f4f4f4" stroke-width="1.1"/>
    <circle cx="1844" cy="145.4" r="5.6" fill="#111" stroke="#ddd" stroke-width="1.1"/>
    <path d="M1841.3,147 L1844,143.6 L1846.7,147z" fill="#fff"/>
    <circle cx="1843.8" cy="349.5" r="5.6" fill="#111" stroke="#ddd" stroke-width="1.1"/>
    <path d="M1841.3,348 L1846.3,348 L1843.8,351.5z" fill="#fff"/>
    <rect x="1626" y="338.5" width="9" height="8.5" fill="#e8e8e8" stroke="#999" stroke-width="0.6"/>
    <rect x="1628" y="342.2" width="5" height="1.4" fill="#222"/>
    <rect x="1642.3" y="337" width="13.6" height="13" fill="#d8d8d8" stroke="#555" stroke-width="0.9"/>
    <path d="M1645,343 L1648,347.3 L1654,338.8" fill="none" stroke="#fff" stroke-width="2"/>
    <rect x="1821" y="337.5" width="10.6" height="10.5" fill="#f2f2f2" stroke="#888" stroke-width="0.6"/>
    <path d="M1823.3,340.5 L1829.3,340.5 L1826.3,344.5z" fill="#555"/>
    <path d="M1870,372 h1.2 M1867,372 h1.2 M1870,369 h1.2 M1864,372 h1.2 M1867,369 h1.2 M1870,366 h1.2" stroke="#ddd" stroke-width="1.3"/>
    <!-- layer icon -->
    <path d="M1557,118 L1575,109.5 L1596,114 L1578,124.5z" fill="#2a7ad0"/>
    <path d="M1564,117 L1578,113 L1586,118 L1576,121z" fill="#40b040"/>
  </svg>
  <div class="pt" style="left:24px;top:5px;font-weight:bold;font-size:13px;letter-spacing:0.55px;">Layer List - Table of Contents</div>
  <div class="pt" style="left:25px;top:34px;">Layer Visibility</div>
  <div class="lg" style="top:71px;background:#b4b4b4;"></div><div class="pt" style="left:114px;top:62px;">CS</div>
  <div class="lg" style="top:94.5px;background:#000;height:2.5px;"></div><div class="pt" style="left:114px;top:86px;">FM</div>
  <div class="lg" style="top:118.5px;background:#444;"></div><div class="pt" style="left:114px;top:110px;">FR</div>
  <div class="lg" style="top:141px;background:#5b8fd6;height:3.5px;border-top:0.5px solid #2a4a80;border-bottom:0.5px solid #2a4a80;box-sizing:border-box;"></div><div class="pt" style="left:114px;top:134px;">IH</div>
  <div class="lg" style="top:166px;background:repeating-linear-gradient(90deg,#555 0 6px,transparent 6px 10px);"></div><div class="pt" style="left:114px;top:158px;">PV</div>
  <div class="lg" style="top:189.5px;background:#e83838;height:2.5px;"></div><div class="pt" style="left:114px;top:182px;">RP</div>
  <div class="lg" style="top:212px;background:#f4e4a8;height:4px;border-top:1px solid #333;border-bottom:1px solid #333;box-sizing:border-box;"></div><div class="pt" style="left:114px;top:206px;">SH</div>
  <div class="lg" style="top:236px;background:#f4a000;height:3.5px;"></div><div class="pt" style="left:114px;top:230px;">US</div>
  <div class="pt" style="left:83px;top:254px;">City Limits</div>
</div>
<!-- layer list icon outside panel -->
<svg style="position:absolute;left:1555px;top:99px" width="44" height="32" viewBox="1555 99 44 32">
  <path d="M1558,121 L1576,113 L1595,117.5 L1577,127z" fill="#1a6ac8" stroke="#0a3a80" stroke-width="0.6"/>
  <path d="M1563,120 L1577,115.5 L1586,120 L1576,124z" fill="#3aaa30"/>
  <path d="M1581,118 L1589,120 L1583,123z" fill="#f0d040"/>
  <path d="M1558,114.5 L1576,106.5 L1595,111 L1577,120.5z" fill="#7ab8ea" stroke="#3a78b8" stroke-width="0.6"/>
  <path d="M1558,108.5 L1576,100.8 L1595,105 L1577,114.5z" fill="#d8dcdf" stroke="#9aa0a4" stroke-width="0.6"/>
  <circle cx="1570" cy="107" r="1.1" fill="#e03030"/><circle cx="1577" cy="104.5" r="1.1" fill="#e03030"/><circle cx="1582" cy="108.5" r="1.1" fill="#e03030"/><circle cx="1575" cy="111" r="1.1" fill="#e03030"/><circle cx="1587" cy="106" r="1.1" fill="#e03030"/>
</svg>

<!-- resize icon bottom-right -->
<div style="position:absolute;left:1884px;top:922px;width:24px;height:24px;background:#fafafa;border-left:1px solid #444;border-top:1px solid #444;box-sizing:border-box;">
  <svg width="22" height="22" viewBox="0 0 22 22" style="position:absolute;left:1px;top:1px"><path d="M4,4 L17,17 M4,4 L4,12 M4,4 L12,4" stroke="#333" stroke-width="2.2" fill="none"/></svg>
</div>

<div id="srtab">
  <svg style="position:absolute;left:6px;top:7px" width="18" height="12" viewBox="0 0 18 12"><path d="M1,10 Q3,2 9,2 Q15,2 17,9 L13,11 Q11,6 9,6 Q6,6 5,11z" fill="#111"/><circle cx="4" cy="10" r="2" fill="#3aa0d0"/></svg>
  <span>Search Results</span>
</div>
<div id="latlon">Lat:29.693880 Long:-96.910019</div>

<div id="bot">
  <div class="c" style="left:11px"></div><div class="t" style="left:18px">Owner Name</div>
  <div class="c" style="left:368px"></div><div class="t" style="left:375px">Property ID</div>
  <div class="c" style="left:471px"></div><div class="t" style="left:478px">Parcel ID</div>
  <div class="c" style="left:559px"></div><div class="t" style="left:566px">Geo ID</div>
  <div class="c" style="left:726px"></div><div class="t" style="left:733px">Legal Description</div>
  <div style="position:absolute;left:935px;top:0;width:38px;height:10px;background:#8a8a8a;"></div>
  <svg style="position:absolute;left:949px;top:1px" width="10" height="6"><path d="M1,5 L5,1 L9,5z" fill="#222"/></svg>
  <div class="c" style="left:1282px"></div><div class="t" style="left:1289px">Legal Acreage</div>
  <div class="c" style="left:1400px"></div><div class="t" style="left:1407px">situs_num</div>
  <div class="c" style="left:1496px"></div><div class="t" style="left:1503px">situs_street_prefix</div>
  <div class="c" style="left:1643px"></div><div class="t" style="left:1650px">situs_street</div>
  <div class="c" style="left:1750px"></div><div class="t" style="left:1757px">situs_street_sufix</div>
  <div class="c" style="left:1894px"></div>
</div>
</body></html>
